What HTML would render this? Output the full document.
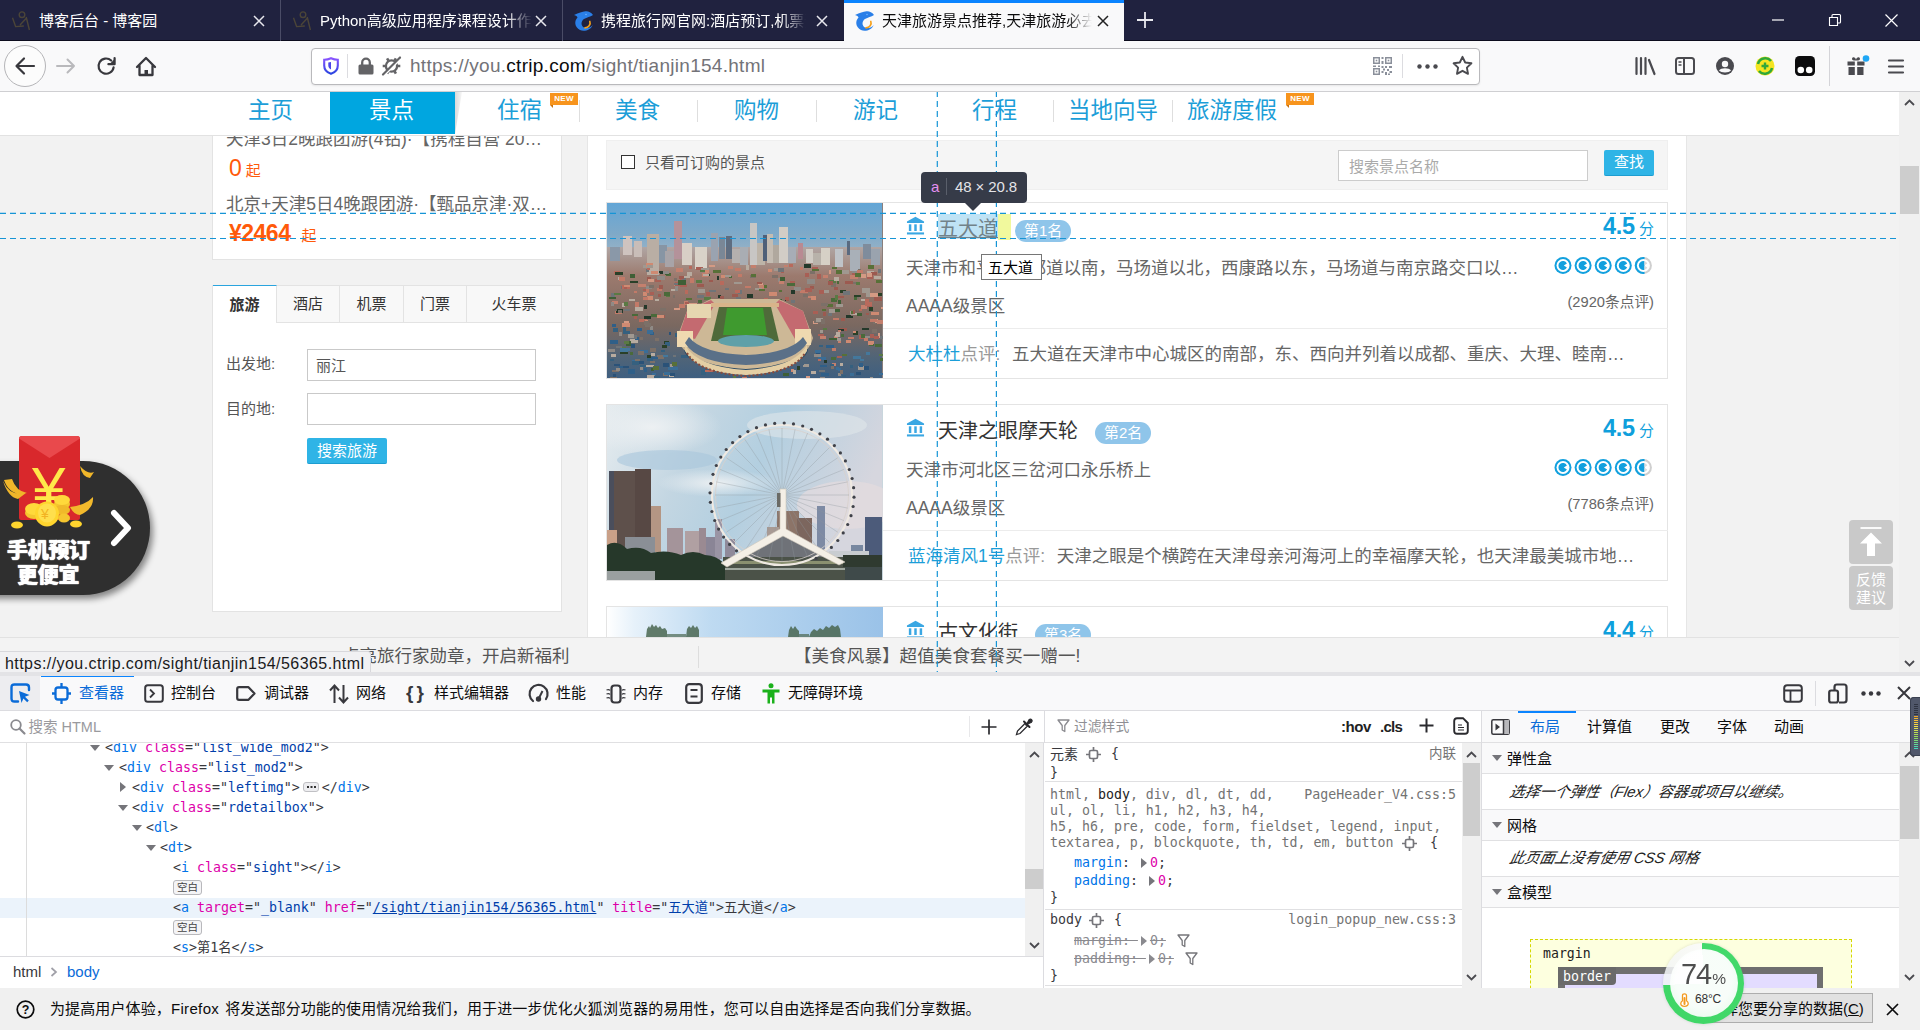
<!DOCTYPE html>
<html lang="zh-CN">
<head>
<meta charset="utf-8">
<title>天津旅游景点推荐</title>
<style>
*{box-sizing:border-box;margin:0;padding:0}
html,body{width:1920px;height:1030px;overflow:hidden;background:#f2f2f2}
body{text-spacing-trim:space-all;position:relative;font-family:"Liberation Sans","Noto Sans CJK SC",sans-serif;font-size:15px;color:#0c0c0d}
.abs{position:absolute}
.t{position:absolute;white-space:nowrap;line-height:1}
.mono{font-family:"DejaVu Sans Mono","Liberation Mono","Noto Sans CJK SC",monospace}
svg{position:absolute;overflow:visible}
/* ===== browser chrome ===== */
#tabbar{left:0;top:0;width:1920px;height:41px;background:#20223f;border-bottom:1px solid #0c0c1d}
.tab{position:absolute;top:0;height:41px;color:#fff;font-size:15px}
.tab .tt{position:absolute;top:12px;white-space:nowrap;line-height:17px;overflow:hidden}
.tabsep{position:absolute;top:0;width:1px;height:41px;background:#4a4c66}
#navbar{z-index:2;left:0;top:41px;width:1920px;height:51px;background:#f9f9fa;border-bottom:1px solid #cfcfd2}
#urlbar{left:311px;top:7px;width:1169px;height:37px;background:#fff;border:1px solid #b9b9bc;border-radius:4px;box-shadow:0 1px 2px rgba(0,0,0,.08)}
/* ===== page ===== */
#page{left:0;top:91px;width:1899px;height:581px;background:#f2f2f2;overflow:hidden}
#pscroll{left:1899px;top:91px;width:21px;height:581px;background:#f0f0f0}

/* page css */
#pnav{left:0;top:1px;width:1899px;height:44px;background:#fff;border-bottom:1px solid #e2e2e2}
.nv{position:absolute;top:7px;font-size:22.500px;line-height:24px;color:#1c9ed8;white-space:nowrap}
.nvs{position:absolute;top:8px;width:1px;height:22px;background:#dedede}
.newb{position:absolute;top:1px;width:28px;height:12px;background:#f7941d;color:#fff;font-size:8px;line-height:12px;text-align:center;font-weight:bold;letter-spacing:.3px}
.newb:after{content:"";position:absolute;left:0;top:12px;border-top:3px solid #c9730f;border-left:3px solid transparent}
#lbox1{left:212px;top:44px;width:350px;height:125px;background:#fff;border:1px solid #e3e3e3;border-top:0}
#lbox2{left:212px;top:194px;width:350px;height:327px;background:#fff;border:1px solid #e3e3e3}
.ltab{position:absolute;top:0;height:37px;background:#f8f8f8;border-right:1px solid #e3e3e3;border-bottom:1px solid #e3e3e3;font-size:15px;line-height:36px;text-align:center;color:#333}
#main{left:587px;top:44px;width:1100px;height:540px;background:#fff;border-left:1px solid #e6e6e6;border-right:1px solid #e6e6e6}
#filter{left:606px;top:49px;width:1062px;height:50px;background:#f5f5f5;border:1px solid #efefef}
.card{position:absolute;left:606px;width:1062px;height:177px;background:#fff;border:1px solid #e4e4e4}
.card .ttl{position:absolute;left:331px;top:13px;font-size:20px;line-height:26px;color:#333;white-space:nowrap}
.card .rank{position:absolute;top:17px;height:22px;border-radius:11px;background:#8fc5ea;color:#fff;font-size:15px;line-height:22px;padding:0 9px;margin-left:-1px;white-space:nowrap}
.card .addr{position:absolute;left:299px;top:53px;font-size:17.500px;line-height:24px;color:#666;white-space:nowrap}
.card .lvl{position:absolute;left:299px;top:91px;font-size:17.500px;line-height:24px;color:#666;white-space:nowrap}
.card .sep{position:absolute;left:276px;top:125px;width:785px;height:1px;background:#ececec}
.card .cmt{position:absolute;left:301px;top:139px;font-size:17.500px;line-height:24px;color:#666;white-space:nowrap}
.card .cmt b{font-weight:normal;color:#1c9ed8}
.card .cmt i{font-style:normal;color:#999;margin-right:2px}
.card .score{position:absolute;right:13px;top:8px;font-size:15px;line-height:30px;color:#0f9fdc;white-space:nowrap}
.card .score b{font-size:23.500px;font-family:"Liberation Sans",sans-serif;letter-spacing:-.3px}
.card .cnt{position:absolute;right:13px;top:89px;font-size:14.700px;line-height:20px;color:#666;white-space:nowrap}
.btnb{position:absolute;background:#2fb4e6;color:#fff;font-size:15px;text-align:center;border-radius:2px;border-bottom:1px solid #1d9dd0}
#pbottom{left:0;top:546px;width:1899px;height:35px;background:#f3f3f3;border-top:1px solid #e2e2e2}
/* ===== devtools ===== */
#split{left:0;top:672px;width:1920px;height:4px;background:#e3e3e6}
#dt{left:0;top:676px;width:1920px;height:312px;background:#fff;overflow:hidden}

/* devtools css */
#dtbar{left:0;top:0;width:1920px;height:35px;background:#f9f9fa;border-bottom:1px solid #dcdce0}
.dtt{position:absolute;top:8px;font-size:15px;line-height:17px;color:#0c0c0d;white-space:nowrap}
#dtsearch{left:0;top:35px;width:1920px;height:32px;background:#fff;border-bottom:1px solid #e0e0e2}
.ml{position:absolute;left:0;width:1024px;height:20px;margin-top:1px;font-size:13.270px;line-height:20px;white-space:pre;color:#38383d}
.ml .tg{color:#0074e8}.ml .an{color:#dd00a9}.ml .av{color:#003eaa}
.tw{position:absolute;width:0;height:0}
.tw.d{border-left:5px solid transparent;border-right:5px solid transparent;border-top:6px solid #75757a}
.tw.r{border-top:5px solid transparent;border-bottom:5px solid transparent;border-left:6px solid #75757a}
.ws{position:absolute;height:14.500px;border:1px solid #b8b8bc;border-radius:3px;background:#f4f4f6;font-size:10.500px;line-height:12.500px;padding:0 3px;color:#444;font-family:"Liberation Sans","Noto Sans CJK SC",sans-serif}
.rl{position:absolute;margin-left:1px;font-size:13.270px;line-height:16px;white-space:pre;color:#737373}
.rl .pn{color:#0074e8}.rl .pv{color:#dd00a9}
.lh{position:absolute;left:1482px;width:417px;height:32px;background:#f9f9fa;border-top:1px solid #e0e0e2;border-bottom:1px solid #e0e0e2}
.lh .t{left:25px;top:6.500px;font-size:15px;line-height:17px;color:#0c0c0d}
.lh .tw{left:10px;top:12px}
.li{position:absolute;left:1508px;font-size:15px;line-height:18px;font-style:italic;color:#222;white-space:nowrap;transform:skewX(-12deg);transform-origin:0 100%}
.sba{position:absolute;width:10px;height:6px}
#notif{left:0;top:988px;width:1920px;height:42px;background:#f0f0f0}
</style>
</head>
<body>
<!-- TABBAR -->
<div id="tabbar" class="abs">
  <!-- tab 1 -->
  <div class="tab" style="left:0;width:280px">
    <svg style="left:12px;top:11px" width="18" height="18" viewBox="0 0 18 18"><circle cx="10" cy="3.700" r="2.800" fill="none" stroke="#4b4538" stroke-width="1.400"/><path d="M0.500 6.800L3.600 15.600L11.800 15M14.500 7L8 14M14.200 6L17.400 19" fill="none" stroke="#4b4538" stroke-width="1.400"/></svg>
    <div class="tt" style="left:39px;width:200px">博客后台 - 博客园</div>
    <svg style="left:253px;top:15px" width="12" height="12" viewBox="0 0 12 12"><path d="M1 1L11 11M11 1L1 11" stroke="#e8e8ee" stroke-width="1.5" fill="none"/></svg>
  </div>
  <div class="tabsep" style="left:280px"></div>
  <!-- tab 2 -->
  <div class="tab" style="left:281px;width:281px">
    <svg style="left:12px;top:11px" width="18" height="18" viewBox="0 0 18 18"><circle cx="10" cy="3.700" r="2.800" fill="none" stroke="#4b4538" stroke-width="1.400"/><path d="M0.500 6.800L3.600 15.600L11.800 15M14.500 7L8 14M14.200 6L17.400 19" fill="none" stroke="#4b4538" stroke-width="1.400"/></svg>
    <div class="tt" style="left:39px;width:212px;-webkit-mask-image:linear-gradient(90deg,#000 88%,transparent 100%)">Python高级应用程序课程设计作业</div>
    <svg style="left:254px;top:15px" width="12" height="12" viewBox="0 0 12 12"><path d="M1 1L11 11M11 1L1 11" stroke="#e8e8ee" stroke-width="1.5" fill="none"/></svg>
  </div>
  <div class="tabsep" style="left:562px"></div>
  <!-- tab 3 -->
  <div class="tab" style="left:563px;width:281px">
    <svg style="left:11px;top:11px" width="20" height="20" viewBox="0 0 20 20"><path d="M19 4C17 1 14 0 11.500 0.300C8 0.500 5 2 0 4C2 4.500 3.200 5.500 3.500 6.500C0 10 0.500 16 6 19C10 21 17 19 18.700 14C17 16.500 13 18 10 16.500C6.500 14.500 7 10 10 8C13 6.200 16 6 19 4Z" fill="#2a7fe8"/><path d="M15.800 10.500C17 13.500 14.500 16.800 11 16.800" stroke="#f5a01a" stroke-width="1.700" fill="none" stroke-linecap="round"/><circle cx="12" cy="3.500" r="0.800" fill="#6fb0ff"/></svg>
    <div class="tt" style="left:38px;width:205px;-webkit-mask-image:linear-gradient(90deg,#000 88%,transparent 100%)">携程旅行网官网:酒店预订,机票预订</div>
    <svg style="left:253px;top:15px" width="12" height="12" viewBox="0 0 12 12"><path d="M1 1L11 11M11 1L1 11" stroke="#e8e8ee" stroke-width="1.5" fill="none"/></svg>
  </div>
  <!-- tab 4 active -->
  <div class="tab" style="left:844px;width:280px;background:#f9f9fa;color:#0c0c0d;border-top:3px solid #0a84ff">
    <svg style="left:11px;top:8px" width="20" height="20" viewBox="0 0 20 20"><path d="M19 4C17 1 14 0 11.500 0.300C8 0.500 5 2 0 4C2 4.500 3.200 5.500 3.500 6.500C0 10 0.500 16 6 19C10 21 17 19 18.700 14C17 16.500 13 18 10 16.500C6.500 14.500 7 10 10 8C13 6.200 16 6 19 4Z" fill="#2a7fe8"/><path d="M15.800 10.500C17 13.500 14.500 16.800 11 16.800" stroke="#f5a01a" stroke-width="1.700" fill="none" stroke-linecap="round"/><circle cx="12" cy="3.500" r="0.800" fill="#6fb0ff"/></svg>
    <div class="tt" style="left:38px;top:9px;width:210px;-webkit-mask-image:linear-gradient(90deg,#000 88%,transparent 100%)">天津旅游景点推荐,天津旅游必去景点</div>
    <svg style="left:253px;top:12px" width="12" height="12" viewBox="0 0 12 12"><path d="M1 1L11 11M11 1L1 11" stroke="#222" stroke-width="1.5" fill="none"/></svg>
  </div>
  <!-- new tab -->
  <svg style="left:1137px;top:12px" width="16" height="16" viewBox="0 0 16 16"><path d="M8 0V16M0 8H16" stroke="#e8e8ee" stroke-width="1.8" fill="none"/></svg>
  <!-- window controls -->
  <svg style="left:1772px;top:19px" width="12" height="2" viewBox="0 0 12 2"><path d="M0 1H12" stroke="#fff" stroke-width="1.2"/></svg>
  <svg style="left:1829px;top:14px" width="12" height="12" viewBox="0 0 12 12"><path d="M0.5 3.5H8.5V11.5H0.5Z M3 3.5V1.5Q3 0.5 4 0.5H10.5Q11.5 0.5 11.5 1.5V8Q11.5 9 10.5 9H8.5" stroke="#fff" stroke-width="1.1" fill="none"/></svg>
  <svg style="left:1885px;top:14px" width="13" height="13" viewBox="0 0 13 13"><path d="M0.5 0.5L12.5 12.5M12.5 0.5L0.5 12.5" stroke="#fff" stroke-width="1.2" fill="none"/></svg>
</div>
<!-- NAVBAR -->
<div id="navbar" class="abs">
  <!-- back -->
  <div class="abs" style="left:4px;top:4px;width:42px;height:42px;border:1px solid #b5b5b8;border-radius:50%;background:#fcfcfc"></div>
  <svg style="left:15px;top:16px" width="20" height="18" viewBox="0 0 20 18"><path d="M19 9H2M9 1.5L1.5 9L9 16.5" stroke="#38383d" stroke-width="2.2" fill="none" stroke-linecap="round" stroke-linejoin="round"/></svg>
  <svg style="left:56px;top:17px" width="20" height="16" viewBox="0 0 20 16"><path d="M1 8H18M11.5 1.5L18 8L11.5 14.5" stroke="#b9b9bc" stroke-width="2" fill="none" stroke-linecap="round" stroke-linejoin="round"/></svg>
  <!-- reload -->
  <svg style="left:96px;top:15px" width="22" height="21" viewBox="0 0 22 21"><path d="M17.600 11.300A7.600 7.600 0 1 1 15.200 4.500" stroke="#38383d" stroke-width="2.200" fill="none" stroke-linecap="round"/><path d="M18.600 2V8.200H12.400" fill="none" stroke="#38383d" stroke-width="2.200" stroke-linejoin="round" stroke-linecap="round"/><path d="M18.600 3V8.200H13.400Z" fill="#38383d"/></svg>
  <!-- home -->
  <svg style="left:135px;top:15px" width="22" height="21" viewBox="0 0 22 21"><path d="M2 11L11 2L20 11M4.5 9.5V19H17.5V9.5" stroke="#38383d" stroke-width="2.3" fill="none" stroke-linecap="round" stroke-linejoin="round"/><rect x="9.5" y="14" width="3.5" height="5" fill="#38383d"/></svg>
  <div id="urlbar" class="abs">
    <!-- shield -->
    <svg style="left:11px;top:8px" width="16" height="18" viewBox="0 0 16 18"><defs><linearGradient id="shg" x1="0" y1="0" x2="0" y2="1"><stop offset="0" stop-color="#8a55ff"/><stop offset="1" stop-color="#2a44e0"/></linearGradient></defs><path d="M8 1.200C5.500 2.300 3.300 2.700 1.200 2.700V8.500C1.200 12.500 3.800 15.400 8 16.800C12.200 15.400 14.800 12.500 14.800 8.500V2.700C12.700 2.700 10.500 2.300 8 1.200Z" fill="#fff" stroke="url(#shg)" stroke-width="2.100"/><path d="M8 5V12.500C6.300 11.500 5.300 10.300 5.300 8.500V5.500C6.300 5.500 7.200 5.300 8 5Z" fill="#4b46e8"/></svg>
    <div class="abs" style="left:35px;top:5px;width:1px;height:24px;background:#dcdce0"></div>
    <!-- lock -->
    <svg style="left:46px;top:8px" width="16" height="18" viewBox="0 0 16 18"><rect x="0.500" y="7.500" width="15" height="10" rx="1.500" fill="#636366"/><path d="M4.200 8V5.500A3.800 3.800 0 0 1 11.800 5.500V8" stroke="#636366" stroke-width="2.300" fill="none"/></svg>
    <!-- tracking -->
    <svg style="left:70px;top:7px" width="19" height="20" viewBox="0 0 19 20"><circle cx="9.500" cy="10" r="5.600" fill="none" stroke="#636366" stroke-width="2.300"/><path d="M15.7 10.0L18.3 10.0M12.6 15.4L13.9 17.6M6.4 15.4L5.1 17.6M3.3 10.0L0.7 10.0M6.4 4.6L5.1 2.4M12.6 4.6L13.9 2.4" stroke="#636366" stroke-width="2.600"/><path d="M1.800 19.300L18.800 2.300" stroke="#fff" stroke-width="2.400"/><path d="M1 18.500L18 1.500" stroke="#636366" stroke-width="2.200" stroke-linecap="round"/></svg>
    <div class="t" style="left:98px;top:7px;font-size:19px;line-height:20px;color:#737378;letter-spacing:.28px">https://you.<span style="color:#0c0c0d">ctrip.com</span>/sight/tianjin154.html</div>
    <!-- QR -->
    <svg style="left:1061px;top:8px" width="19" height="18" viewBox="0 0 19 18" fill="#8a8f9a"><path d="M0 0h7v7h-7zM1.5 1.5v4h4v-4zM12 0h7v7h-7zM13.500 1.5v4h4v-4zM0 11h7v7h-7zM1.5 12.500v4h4v-4z" fill-rule="evenodd"/><rect x="2.700" y="2.700" width="1.600" height="1.600"/><rect x="14.700" y="2.700" width="1.600" height="1.600"/><rect x="2.700" y="13.700" width="1.600" height="1.600"/><rect x="8.500" y="0" width="2" height="2"/><rect x="8.500" y="4" width="2" height="3"/><rect x="8.500" y="9" width="2" height="2"/><rect x="0" y="8.500" width="3" height="1.500"/><rect x="5" y="8.500" width="2" height="1.500"/><rect x="12" y="9" width="2" height="2"/><rect x="16" y="9" width="3" height="2"/><rect x="10" y="11.500" width="2" height="2"/><rect x="14" y="12" width="2" height="2"/><rect x="8.500" y="14" width="2" height="2"/><rect x="12" y="15" width="2" height="3"/><rect x="16.500" y="14" width="2.500" height="2"/><rect x="15" y="16.500" width="2" height="1.500"/></svg>
    <div class="abs" style="left:1090px;top:5px;width:1px;height:24px;background:#dcdce0"></div>
    <svg style="left:1105px;top:15px" width="21" height="5" viewBox="0 0 21 5" fill="#4a4a4f"><circle cx="2.500" cy="2.500" r="2.200"/><circle cx="10.500" cy="2.500" r="2.200"/><circle cx="18.500" cy="2.500" r="2.200"/></svg>
    <svg style="left:1140px;top:6px" width="21" height="21" viewBox="0 0 21 21"><path d="M10.5 1.800L13.200 7.500L19.400 8.300L14.900 12.600L16 18.800L10.500 15.800L5 18.800L6.100 12.600L1.600 8.300L7.800 7.500Z" fill="none" stroke="#4a4a4f" stroke-width="1.900" stroke-linejoin="round"/></svg>
  </div>
  <!-- library -->
  <svg style="left:1635px;top:16px" width="21" height="18" viewBox="0 0 21 18"><path d="M1.500 1V17M6 1V17M10.500 1V17M14 3L19.500 17" stroke="#4a4a4f" stroke-width="2.200" stroke-linecap="round" fill="none"/></svg>
  <!-- sidebar -->
  <svg style="left:1675px;top:16px" width="20" height="18" viewBox="0 0 20 18"><rect x="1" y="1" width="18" height="16" rx="2.500" fill="none" stroke="#4a4a4f" stroke-width="2"/><path d="M9 1V17" stroke="#4a4a4f" stroke-width="2"/><path d="M3.500 5H6.500M3.500 8H6.500" stroke="#4a4a4f" stroke-width="1.300"/></svg>
  <!-- account -->
  <svg style="left:1716px;top:16px" width="18" height="18" viewBox="0 0 18 18"><circle cx="9" cy="9" r="9" fill="#4a4a4f"/><circle cx="9" cy="7" r="3.200" fill="#f9f9fa"/><path d="M3 13.500C5 10.500 13 10.500 15 13.500C13 16 5 16 3 13.500Z" fill="#f9f9fa"/></svg>
  <!-- 360 -->
  <svg style="left:1755px;top:15px" width="20" height="20" viewBox="0 0 20 20"><circle cx="10" cy="10" r="9.500" fill="#f5e521"/><path d="M3 8A7.500 7.500 0 0 1 16 5M17 12A7.500 7.500 0 0 1 4 15" stroke="#2fa83a" stroke-width="2.600" fill="none"/><path d="M10 6.500V13.500M6.500 10H13.500" stroke="#2fa83a" stroke-width="2.400"/></svg>
  <!-- tampermonkey -->
  <svg style="left:1795px;top:15px" width="20" height="20" viewBox="0 0 20 20"><rect x="0" y="0" width="20" height="20" rx="4.500" fill="#0c0c0d"/><circle cx="5.800" cy="14" r="3.300" fill="#fff"/><circle cx="14.200" cy="14" r="3.300" fill="#fff"/></svg>
  <div class="abs" style="left:1829px;top:5px;width:1px;height:40px;background:#d4d4d8"></div>
  <!-- gift -->
  <svg style="left:1847px;top:15px" width="22" height="20" viewBox="0 0 22 20"><path d="M5 3C5 0 9 1 9 4C9 1 13 0 13 3C13 5 9 4.500 9 4.500C9 4.500 5 5 5 3Z" fill="#4a4a4f"/><rect x="0.500" y="5.500" width="7.300" height="4" fill="#4a4a4f"/><rect x="10.200" y="5.500" width="7.300" height="4" fill="#4a4a4f"/><rect x="1.500" y="11" width="6.300" height="8" fill="#4a4a4f"/><rect x="10.200" y="11" width="6.300" height="8" fill="#4a4a4f"/><circle cx="19" cy="2.500" r="3.300" fill="#1fa7f5"/></svg>
  <!-- menu -->
  <svg style="left:1888px;top:18px" width="16" height="15" viewBox="0 0 16 15"><path d="M1 1.500H15M1 7.500H15M1 13.500H15" stroke="#4a4a4f" stroke-width="2.200" stroke-linecap="round"/></svg>
</div>
<!-- PAGE -->
<div id="page" class="abs">
  <div id="lbox1" class="abs">
    <div class="t" style="left:13px;top:-7px;font-size:17.500px;line-height:22px;color:#666">天津3日2晚跟团游(4钻)·【携程自营 20…</div>
    <div class="t" style="left:16px;top:20px;font-size:23px;line-height:26px;color:#ff5a0a">0<span style="font-size:15px;margin-left:4px">起</span></div>
    <div class="t" style="left:13px;top:58px;font-size:17.500px;line-height:22px;color:#666">北京+天津5日4晚跟团游·【甄品京津·双…</div>
    <div class="t" style="left:16px;top:85px;font-size:23px;line-height:26px;color:#ff5a0a;font-weight:bold;letter-spacing:-.5px">¥2464<span style="font-size:15px;margin-left:11px;font-weight:normal;letter-spacing:0">起</span></div>
  </div>
  <div id="lbox2" class="abs">
    <div class="ltab" style="left:0;width:64px;background:#fff;border-bottom:0;border-top:1px solid #2aa4de;font-weight:bold;margin-top:-1px;height:38px;line-height:37px">旅游</div>
    <div class="ltab" style="left:64px;width:63px">酒店</div>
    <div class="ltab" style="left:127px;width:64px">机票</div>
    <div class="ltab" style="left:191px;width:63px">门票</div>
    <div class="ltab" style="left:254px;width:94px;border-right:0">火车票</div>
    <div class="t" style="left:13px;top:70px;font-size:15px;color:#555">出发地:</div>
    <div class="abs" style="left:94px;top:63px;width:229px;height:32px;border:1px solid #c9c9c9;background:#fff"><div class="t" style="left:8px;top:8px;font-size:15px;color:#555">丽江</div></div>
    <div class="t" style="left:13px;top:115px;font-size:15px;color:#555">目的地:</div>
    <div class="abs" style="left:94px;top:107px;width:229px;height:32px;border:1px solid #c9c9c9;background:#fff"></div>
    <div class="btnb" style="left:94px;top:152px;width:80px;height:26px;line-height:25px">搜索旅游</div>
  </div>
  <div id="main" class="abs"></div>
  <div id="filter" class="abs">
    <div class="abs" style="left:14px;top:14px;width:14px;height:14px;border:1.500px solid #333;background:#fff"></div>
    <div class="t" style="left:38px;top:13px;font-size:15px;line-height:18px;color:#555">只看可订购的景点</div>
    <div class="abs" style="left:731px;top:9px;width:250px;height:31px;border:1px solid #ccc;background:#fff"><div class="t" style="left:10px;top:7px;font-size:15px;line-height:18px;color:#aaa">搜索景点名称</div></div>
    <div class="btnb" style="left:997px;top:9px;width:50px;height:26px;line-height:24px">查找</div>
  </div>
  <!-- card 1 -->
  <div class="card" style="top:111px">
    <div class="abs" id="img1" style="left:0;top:0;width:276px;height:175px;overflow:hidden;background:#8a7f7c"><svg style="left:0;top:0" width="275" height="175" viewBox="0 0 275 175" shape-rendering="crispEdges"><defs><linearGradient id="sk1" x1="0" y1="0" x2="0" y2="1"><stop offset="0" stop-color="#63a6d6"/><stop offset="0.5" stop-color="#7fa9c8"/><stop offset="1" stop-color="#a8b9c6"/></linearGradient><linearGradient id="ct1" x1="0" y1="0" x2="0" y2="1"><stop offset="0" stop-color="#b0a6a4"/><stop offset="0.22" stop-color="#9c7a6e"/><stop offset="0.6" stop-color="#7a6860"/><stop offset="0.85" stop-color="#4f6478"/><stop offset="1" stop-color="#3f5f80"/></linearGradient></defs><rect width="275" height="62" fill="url(#sk1)"/><rect y="44" width="275" height="131" fill="url(#ct1)"/><rect x="16" y="33" width="9" height="19" fill="#cfc3bf"/><rect x="27" y="38" width="8" height="16" fill="#c9bdb8"/><rect x="40" y="31" width="12" height="41" fill="#b9aea4"/><rect x="52" y="42" width="8" height="18" fill="#8795a4"/><rect x="67" y="18" width="8" height="38" fill="#b4929a"/><rect x="75" y="40" width="10" height="22" fill="#d8cfc6"/><rect x="88" y="44" width="12" height="22" fill="#d9d2c8"/><rect x="104" y="30" width="7" height="28" fill="#9aa3b0"/><rect x="112" y="34" width="6" height="22" fill="#7a8796"/><rect x="119" y="33" width="6" height="23" fill="#5f6d80"/><rect x="133" y="44" width="8" height="18" fill="#a9adb3"/><rect x="143" y="20" width="7" height="42" fill="#c8c6c4"/><rect x="150" y="40" width="8" height="22" fill="#bdb4a8"/><rect x="156" y="32" width="5" height="26" fill="#4f6078"/><rect x="160" y="31" width="6" height="29" fill="#c4bcb2"/><rect x="166" y="42" width="6" height="18" fill="#b0a89e"/><rect x="172" y="24" width="9" height="36" fill="#d2cdc6"/><rect x="181" y="44" width="8" height="16" fill="#a7adb6"/><rect x="191" y="40" width="5" height="16" fill="#b98a92"/><rect x="199" y="46" width="7" height="14" fill="#d0cbc4"/><rect x="214" y="45" width="9" height="17" fill="#d6d0c6"/><rect x="228" y="46" width="8" height="18" fill="#bfc3c8"/><rect x="240" y="38" width="3" height="14" fill="#5a6a80"/><rect x="243" y="47" width="10" height="21" fill="#a9b0b8"/><rect x="256" y="41" width="8" height="15" fill="#7f8c9c"/><rect x="264" y="46" width="9" height="16" fill="#9aa3ae"/><rect x="3" y="44" width="10" height="14" fill="#8a98a8"/><rect x="58" y="48" width="9" height="16" fill="#a8a4a8"/><rect x="125" y="46" width="8" height="14" fill="#b5b0ae"/><rect x="206" y="50" width="8" height="12" fill="#b8b2aa"/><rect x="89.1" y="77.3" width="6.1" height="2.2" fill="#5a7a44"/><rect x="59" y="69.9" width="4.8" height="2.6" fill="#4a6a3a"/><rect x="227.4" y="74.2" width="3.7" height="3.6" fill="#7c7068"/><rect x="161" y="65.7" width="3.7" height="3.4" fill="#cf8a72"/><rect x="39.7" y="73.5" width="4.2" height="4" fill="#9c5a50"/><rect x="157.1" y="81.6" width="3" height="3.8" fill="#587038"/><rect x="56.6" y="138.2" width="4.9" height="2.8" fill="#2a4028"/><rect x="99.4" y="88.6" width="3.5" height="3.9" fill="#a85f55"/><rect x="200.6" y="93.1" width="7.9" height="2.3" fill="#c4806e"/><rect x="94.1" y="167.3" width="4.8" height="4.4" fill="#35607f"/><rect x="259.8" y="114.5" width="6.2" height="2.2" fill="#7c7068"/><rect x="273.1" y="154.5" width="4.1" height="3" fill="#4a6a3a"/><rect x="258.7" y="100.9" width="5.9" height="3.2" fill="#a85f55"/><rect x="35.6" y="88.5" width="4.7" height="4.2" fill="#cf8a72"/><rect x="110.5" y="92" width="3.3" height="3.1" fill="#24382a"/><rect x="243.2" y="170.1" width="3.3" height="2.4" fill="#3a6d96"/><rect x="3.3" y="155.6" width="3.5" height="2.7" fill="#35607f"/><rect x="262.1" y="139.4" width="5.3" height="3.5" fill="#4a6a3a"/><rect x="261.8" y="138.3" width="5.6" height="3" fill="#cf8a72"/><rect x="174.4" y="67.2" width="2.9" height="2.5" fill="#a85f55"/><rect x="165.2" y="71.8" width="5.6" height="3.3" fill="#7c7068"/><rect x="7" y="160.5" width="5.9" height="2.4" fill="#2a5278"/><rect x="31.7" y="116.1" width="7.9" height="3.2" fill="#b86a5c"/><rect x="28.1" y="99.4" width="4" height="4.1" fill="#c27a68"/><rect x="56.4" y="169.5" width="4.5" height="3.7" fill="#7c7068"/><rect x="25" y="157.2" width="5.4" height="4.3" fill="#3a6d96"/><rect x="90.7" y="85.6" width="7" height="4.5" fill="#a09890"/><rect x="225" y="145.1" width="3.7" height="3.3" fill="#c27a68"/><rect x="272.1" y="150.9" width="5.1" height="2.5" fill="#5a7a44"/><rect x="271.7" y="169.8" width="4.5" height="2.6" fill="#3a6d96"/><rect x="270.9" y="130.2" width="2.5" height="4.3" fill="#d49a84"/><rect x="23.3" y="136" width="7.5" height="4" fill="#b8aca0"/><rect x="244.5" y="109.9" width="6" height="2.2" fill="#b8aca0"/><rect x="23.4" y="78.3" width="8" height="2.1" fill="#2a4028"/><rect x="221.8" y="76.8" width="7" height="4.5" fill="#5a7a44"/><rect x="42.9" y="123.1" width="2.6" height="4" fill="#8f8a86"/><rect x="227.2" y="84.3" width="3.9" height="2.7" fill="#9c5a50"/><rect x="229.4" y="67" width="6.6" height="4.2" fill="#587038"/><rect x="144" y="62.2" width="4.9" height="2.5" fill="#c4806e"/><rect x="41.2" y="76.3" width="5.9" height="2.3" fill="#d49a84"/><rect x="215.7" y="72.2" width="5.6" height="2.6" fill="#c4806e"/><rect x="26.9" y="112" width="2.7" height="4.2" fill="#a85f55"/><rect x="259.1" y="89.9" width="5.6" height="4.4" fill="#a09890"/><rect x="117.8" y="84.5" width="4.2" height="2.3" fill="#6f7478"/><rect x="39.3" y="161.5" width="7.8" height="2.5" fill="#b8aca0"/><rect x="243.4" y="78.7" width="6.2" height="2.6" fill="#7c7068"/><rect x="98.1" y="70.6" width="4.5" height="2.8" fill="#24382a"/><rect x="5" y="98.1" width="5.9" height="3.3" fill="#c4806e"/><rect x="62.9" y="160.8" width="3" height="2.7" fill="#a09890"/><rect x="74.4" y="74.9" width="4.8" height="4.3" fill="#6f7478"/><rect x="89.9" y="92.1" width="6.9" height="2.5" fill="#6f7478"/><rect x="258" y="133" width="6.9" height="2.2" fill="#8f8a86"/><rect x="72.7" y="74" width="2.6" height="4.5" fill="#a85f55"/><rect x="171" y="65" width="6.4" height="4.3" fill="#6f7478"/><rect x="13.9" y="83.2" width="4.2" height="2.8" fill="#6f7478"/><rect x="74.4" y="152.4" width="8" height="2.1" fill="#35607f"/><rect x="151.5" y="81.8" width="5.1" height="4.3" fill="#c4806e"/><rect x="266.8" y="95.4" width="3.7" height="2.6" fill="#d49a84"/><rect x="200.4" y="76.1" width="7.9" height="4.5" fill="#8f8a86"/><rect x="19.4" y="145.2" width="3.9" height="2.4" fill="#44789c"/><rect x="239.4" y="137.1" width="4.1" height="2.6" fill="#cf8a72"/><rect x="51" y="90.9" width="2.5" height="2.9" fill="#9c5a50"/><rect x="89" y="64" width="7.4" height="2.5" fill="#a85f55"/><rect x="138.3" y="83.1" width="5.3" height="2" fill="#c27a68"/><rect x="39.6" y="127.5" width="4.7" height="2.7" fill="#4a6a3a"/><rect x="196.9" y="161.1" width="4.6" height="2.8" fill="#a09890"/><rect x="39.8" y="154.9" width="6.4" height="3.3" fill="#35607f"/><rect x="38.3" y="120.2" width="5.3" height="4.1" fill="#7c7068"/><rect x="219.4" y="141.8" width="7.8" height="3.6" fill="#2f5f88"/><rect x="36.6" y="101.5" width="3.1" height="4.1" fill="#24382a"/><rect x="5.2" y="121.1" width="3.8" height="2.7" fill="#2f5f88"/><rect x="205.8" y="117.8" width="5.4" height="3.6" fill="#d49a84"/><rect x="232.7" y="87" width="6.7" height="2.6" fill="#2a4028"/><rect x="210.9" y="131" width="6" height="2.2" fill="#a85f55"/><rect x="170.8" y="75.3" width="5.2" height="3.2" fill="#8f8a86"/><rect x="32.6" y="162.8" width="3.6" height="4.4" fill="#8f8a86"/><rect x="79.6" y="68.8" width="5.3" height="4.5" fill="#b8aca0"/><rect x="57.7" y="168.7" width="3.7" height="3.5" fill="#35607f"/><rect x="72" y="101.3" width="5.8" height="3.6" fill="#c27a68"/><rect x="193.4" y="86.6" width="7.4" height="3.2" fill="#c27a68"/><rect x="261.2" y="138.4" width="4.7" height="3.8" fill="#cf8a72"/><rect x="0.5" y="146.3" width="7.1" height="2.3" fill="#8f8a86"/><rect x="247.9" y="93.3" width="4.5" height="3" fill="#7c7068"/><rect x="21" y="166.4" width="6.7" height="4.1" fill="#2f5f88"/><rect x="229.5" y="92.8" width="7.6" height="2.6" fill="#9c5a50"/><rect x="215.9" y="109.2" width="2.7" height="3.9" fill="#9c5a50"/><rect x="13.6" y="144.2" width="5" height="3.9" fill="#5a7a44"/><rect x="151.3" y="79.6" width="4.8" height="2.7" fill="#d49a84"/><rect x="268.5" y="89.9" width="6.1" height="2.8" fill="#2a4028"/><rect x="32.9" y="134" width="2.9" height="3.3" fill="#7c7068"/><rect x="60.5" y="164.2" width="8" height="3.1" fill="#3a6d96"/><rect x="67.1" y="80.1" width="5.6" height="2.8" fill="#c4806e"/><rect x="206.2" y="107.5" width="4.8" height="3.3" fill="#a85f55"/><rect x="206.8" y="117.3" width="5.7" height="2.9" fill="#7c7068"/><rect x="59.4" y="91.2" width="3.9" height="3" fill="#5a7a44"/><rect x="233.4" y="160.4" width="2.6" height="2.1" fill="#b8aca0"/><rect x="266.3" y="116.3" width="2.9" height="4.3" fill="#7c7068"/><rect x="235.3" y="171.8" width="3.9" height="2.3" fill="#35607f"/><rect x="267.3" y="72.5" width="7" height="3.8" fill="#b8aca0"/><rect x="23.4" y="149.3" width="2.5" height="2.3" fill="#4a6a3a"/><rect x="177.5" y="94.9" width="3.2" height="2.6" fill="#24382a"/><rect x="210.1" y="71.4" width="4.2" height="4.4" fill="#a85f55"/><rect x="61.5" y="129.1" width="2.6" height="2.8" fill="#2a5278"/><rect x="130.7" y="87" width="3.9" height="4.4" fill="#6f7478"/><rect x="15.2" y="82.3" width="7.4" height="3.6" fill="#b86a5c"/><rect x="183.5" y="166.4" width="3.7" height="2.1" fill="#cf8a72"/><rect x="1.9" y="93.6" width="7.1" height="2.2" fill="#3f5f36"/><rect x="63.5" y="85.5" width="6.7" height="2.7" fill="#b8aca0"/><rect x="15.5" y="128.4" width="7.6" height="2.1" fill="#35607f"/><rect x="39" y="66" width="2.8" height="3" fill="#6f7478"/><rect x="201.5" y="174.7" width="7.6" height="2.8" fill="#35607f"/><rect x="205.2" y="63.7" width="6.2" height="2.9" fill="#a85f55"/><rect x="121.7" y="72.5" width="2.9" height="2.2" fill="#4a6a3a"/><rect x="24.1" y="141.1" width="3.6" height="3.4" fill="#2a5278"/><rect x="8.3" y="107.2" width="7" height="3.9" fill="#c27a68"/><rect x="17.1" y="82.4" width="2.8" height="3.5" fill="#a85f55"/><rect x="263.4" y="131" width="3.9" height="3.8" fill="#a85f55"/><rect x="260.3" y="67.5" width="7" height="2.3" fill="#b8aca0"/><rect x="262.3" y="104.4" width="3.9" height="3.1" fill="#2a4028"/><rect x="50.3" y="152.3" width="6.6" height="4.1" fill="#7c7068"/><rect x="64.9" y="159" width="5" height="4" fill="#587038"/><rect x="54.3" y="146.6" width="3.9" height="2.2" fill="#35607f"/><rect x="149.8" y="78.5" width="4.8" height="2.3" fill="#9c5a50"/><rect x="23.1" y="71.1" width="5.2" height="3.8" fill="#3f5f36"/><rect x="36.6" y="113" width="7.4" height="2.6" fill="#24382a"/><rect x="208.9" y="149.7" width="4.1" height="2.7" fill="#2a5278"/><rect x="203" y="82.9" width="3.9" height="2.6" fill="#9c5a50"/><rect x="51.8" y="67.5" width="3.9" height="2.6" fill="#24382a"/><rect x="222.3" y="135.1" width="8" height="2.3" fill="#3f5f36"/><rect x="231.2" y="165.2" width="2.7" height="2.7" fill="#3a6d96"/><rect x="53.4" y="68.6" width="5.3" height="2.4" fill="#24382a"/><rect x="260.1" y="72.2" width="5.8" height="3.5" fill="#a85f55"/><rect x="93.5" y="65.1" width="8" height="2.1" fill="#a09890"/><rect x="224.1" y="154.2" width="4.7" height="2.9" fill="#4a6a3a"/><rect x="55.9" y="151.5" width="5.5" height="2.2" fill="#44789c"/><rect x="182.6" y="77.8" width="5.4" height="3.6" fill="#a85f55"/><rect x="112.7" y="92.6" width="4.2" height="4.4" fill="#9c5a50"/><rect x="243" y="107.6" width="2.6" height="3.9" fill="#a09890"/><rect x="259" y="109.9" width="3.4" height="2.3" fill="#9c5a50"/><rect x="242.8" y="113" width="3.4" height="2" fill="#24382a"/><rect x="221.8" y="105.6" width="5.7" height="4.3" fill="#a09890"/><rect x="40.1" y="92.6" width="5.4" height="4.3" fill="#cf8a72"/><rect x="207.2" y="151.1" width="6.9" height="2.8" fill="#8f8a86"/><rect x="268.3" y="115.5" width="2.8" height="4.3" fill="#d49a84"/><rect x="44.1" y="150.4" width="3.7" height="3" fill="#b8aca0"/><rect x="50.3" y="85.1" width="4.7" height="3.3" fill="#c27a68"/><rect x="41.1" y="171.6" width="7" height="2.5" fill="#8f8a86"/><rect x="183.7" y="97.3" width="4.6" height="3.1" fill="#6f7478"/><rect x="178.5" y="95.4" width="3.9" height="3" fill="#9c5a50"/><rect x="120.5" y="62.7" width="5.9" height="3.2" fill="#c4806e"/><rect x="230" y="153.2" width="4.7" height="2.2" fill="#a85f55"/><rect x="25.2" y="110.8" width="5.3" height="2.1" fill="#4a6a3a"/><rect x="253.6" y="96.1" width="6.5" height="2.2" fill="#b8aca0"/><rect x="7.1" y="67.6" width="5.9" height="3.7" fill="#b86a5c"/><rect x="270" y="116.6" width="7.8" height="4.3" fill="#c4806e"/><rect x="198.3" y="85.4" width="7.1" height="3.5" fill="#a85f55"/><rect x="246.5" y="91.6" width="7" height="2.4" fill="#2a4028"/><rect x="57.3" y="90.2" width="5.3" height="2.8" fill="#b86a5c"/><rect x="76.5" y="97.7" width="4.6" height="4" fill="#c4806e"/><rect x="242.7" y="72" width="8" height="3.6" fill="#c4806e"/><rect x="101.5" y="76.8" width="4.3" height="2.2" fill="#9c5a50"/><rect x="204.5" y="65.6" width="7" height="2.6" fill="#587038"/><rect x="255.3" y="163" width="6.5" height="3.9" fill="#2a5278"/><rect x="36.3" y="86.1" width="6.1" height="2.1" fill="#a85f55"/><rect x="82.8" y="75.4" width="4.5" height="4.1" fill="#c27a68"/><rect x="257.6" y="88" width="3.3" height="2.2" fill="#24382a"/><rect x="215.1" y="106.2" width="4" height="2" fill="#587038"/><rect x="245.5" y="128.4" width="5.7" height="3.5" fill="#2a4028"/><rect x="68.3" y="163.9" width="2.7" height="3.3" fill="#3a6d96"/><rect x="43.8" y="164.9" width="3.1" height="3.5" fill="#3f5f36"/><rect x="39.1" y="82.9" width="5.8" height="3.3" fill="#587038"/><rect x="48" y="95.6" width="4.2" height="2.1" fill="#b8aca0"/><rect x="196.7" y="60.7" width="7.1" height="3.9" fill="#24382a"/><rect x="180.3" y="80.2" width="8" height="2.7" fill="#4a6a3a"/><rect x="195.7" y="90.6" width="5.5" height="3.1" fill="#7c7068"/><rect x="267.3" y="94" width="7.6" height="4.2" fill="#9c5a50"/><rect x="4.2" y="89.9" width="3.8" height="3.9" fill="#6f7478"/><rect x="52.8" y="104.7" width="5.8" height="2.9" fill="#7c7068"/><rect x="156.8" y="95.4" width="3.7" height="3.6" fill="#b86a5c"/><rect x="39.8" y="63.1" width="3.1" height="4.3" fill="#b86a5c"/><rect x="192.7" y="63.6" width="3.3" height="3.6" fill="#c27a68"/><rect x="202.6" y="67.6" width="5.7" height="2.9" fill="#7c7068"/><rect x="245.1" y="67.6" width="7.3" height="4.3" fill="#8f8a86"/><rect x="67.8" y="83.4" width="2.7" height="4.4" fill="#8f8a86"/><rect x="226.9" y="132.6" width="4.1" height="2.2" fill="#c4806e"/><rect x="177.7" y="93.9" width="4.4" height="2.7" fill="#a85f55"/><rect x="13.3" y="147.4" width="7.5" height="3.9" fill="#2a4028"/><rect x="234.1" y="131.1" width="2.7" height="3" fill="#4a6a3a"/><rect x="147.9" y="84.9" width="7.2" height="2.2" fill="#a09890"/><rect x="14.8" y="100" width="3" height="3.7" fill="#b8aca0"/><rect x="43.7" y="153.8" width="7.7" height="2.6" fill="#2f5f88"/><rect x="134.8" y="174" width="5.6" height="2.3" fill="#c27a68"/><rect x="244.9" y="69.9" width="7.4" height="2.1" fill="#a85f55"/><rect x="47.1" y="173" width="6" height="4.4" fill="#35607f"/><rect x="207.5" y="146.6" width="6.1" height="2.9" fill="#3a6d96"/><rect x="238.7" y="111.8" width="5.5" height="2.8" fill="#24382a"/><rect x="212.7" y="126.6" width="3.2" height="3.2" fill="#a09890"/><rect x="139.6" y="90.8" width="6.7" height="4.1" fill="#24382a"/><rect x="42.9" y="88.5" width="4.3" height="3.3" fill="#a85f55"/><rect x="262.8" y="89.7" width="7.8" height="4.5" fill="#d49a84"/><rect x="28" y="104.2" width="7.9" height="4" fill="#b8aca0"/><rect x="75.3" y="72.6" width="7.5" height="2.7" fill="#b8aca0"/><rect x="9.3" y="105.9" width="6.9" height="3.7" fill="#24382a"/><rect x="81.5" y="62.5" width="3.9" height="3.8" fill="#b86a5c"/><rect x="249.7" y="109.5" width="5.7" height="3.9" fill="#3f5f36"/><rect x="241.3" y="133.8" width="5.7" height="2.6" fill="#c27a68"/><rect x="124.8" y="96" width="6" height="2.2" fill="#c4806e"/><rect x="43" y="157.7" width="5.2" height="2" fill="#7c7068"/><rect x="185.7" y="167" width="3.5" height="3.6" fill="#b8aca0"/><rect x="228.8" y="164.4" width="3.1" height="2.6" fill="#3a6d96"/><rect x="142.8" y="71.6" width="5.7" height="3.4" fill="#7c7068"/><rect x="4.4" y="151.1" width="4.5" height="2.9" fill="#b8aca0"/><rect x="57.8" y="138.7" width="4.7" height="3.9" fill="#35607f"/><rect x="97.8" y="66.5" width="4" height="3" fill="#cf8a72"/><rect x="251.7" y="132.3" width="6.2" height="3.5" fill="#a85f55"/><rect x="203.9" y="168.1" width="5.4" height="2.5" fill="#b8aca0"/><rect x="127.1" y="78.9" width="7.6" height="2.2" fill="#a09890"/><rect x="62.1" y="170.8" width="4.4" height="3.6" fill="#b8aca0"/><rect x="128.7" y="93.8" width="5.5" height="2.3" fill="#6f7478"/><rect x="215.5" y="86.5" width="6.4" height="3.7" fill="#a09890"/><rect x="219.7" y="101.2" width="6.1" height="2.8" fill="#587038"/><rect x="235" y="66.6" width="7.1" height="4.3" fill="#a09890"/><rect x="57.7" y="68.3" width="4.1" height="3.5" fill="#3f5f36"/><rect x="51.1" y="112" width="6.8" height="2.5" fill="#9c5a50"/><rect x="46.2" y="162.5" width="5.8" height="4" fill="#587038"/><rect x="216.7" y="156.5" width="3.6" height="3.7" fill="#24382a"/><rect x="230.8" y="137.2" width="3.1" height="2.3" fill="#c4806e"/><rect x="38.3" y="116.7" width="2.8" height="3.2" fill="#cf8a72"/><rect x="67.8" y="78.9" width="5.8" height="3.8" fill="#a85f55"/><rect x="264.2" y="68.7" width="6" height="3.6" fill="#9c5a50"/><rect x="12.6" y="144.7" width="8" height="4" fill="#44789c"/><rect x="9.3" y="142.6" width="5.9" height="2.8" fill="#6f7478"/><rect x="78.1" y="99.3" width="3.9" height="2.1" fill="#a85f55"/><rect x="227.6" y="106.4" width="5.3" height="2.7" fill="#3f5f36"/><rect x="91" y="96.5" width="4.1" height="3.5" fill="#4a6a3a"/><rect x="109.6" y="72.5" width="2.8" height="4.1" fill="#24382a"/><rect x="16.5" y="117.6" width="5.5" height="2.9" fill="#d49a84"/><rect x="187.3" y="84.4" width="6.2" height="3.1" fill="#8f8a86"/><rect x="115.9" y="71.6" width="7.6" height="2" fill="#a09890"/><rect x="216.3" y="124.6" width="3.9" height="2.8" fill="#5a7a44"/><rect x="5.6" y="125.1" width="5.7" height="4.3" fill="#35607f"/><rect x="10.8" y="73.7" width="7" height="3.4" fill="#b8aca0"/><rect x="18.5" y="138.2" width="5.8" height="4.5" fill="#3f5f36"/><rect x="28.1" y="134.1" width="3.7" height="2.4" fill="#2f5f88"/><rect x="2.6" y="137" width="7.9" height="4.1" fill="#2f5f88"/><rect x="35.5" y="62" width="6.5" height="2.6" fill="#a09890"/><rect x="253.8" y="102.1" width="6.6" height="3.7" fill="#c4806e"/><rect x="23.2" y="132.3" width="6.4" height="3.2" fill="#6f7478"/><rect x="251.2" y="66.1" width="2.7" height="2.2" fill="#7c7068"/><rect x="21.9" y="95.8" width="6.5" height="2.4" fill="#b8aca0"/><rect x="167.5" y="96.4" width="7.7" height="3.8" fill="#3f5f36"/><rect x="39.8" y="151.7" width="4.5" height="3.6" fill="#2a4028"/><rect x="124.5" y="91.3" width="6.7" height="2.8" fill="#9c5a50"/><rect x="267.8" y="140.9" width="7.1" height="2.8" fill="#4a6a3a"/><rect x="228.6" y="129.1" width="4.2" height="3.1" fill="#b8aca0"/><rect x="212.1" y="87" width="5" height="3.7" fill="#a85f55"/><rect x="224.4" y="162.1" width="2.7" height="4.1" fill="#7c7068"/><rect x="40.4" y="172.2" width="6.9" height="3.4" fill="#b8aca0"/><rect x="95.4" y="69.8" width="5.5" height="4" fill="#c4806e"/><rect x="198.6" y="173" width="4.2" height="2.1" fill="#d49a84"/><rect x="56.8" y="89.3" width="6.6" height="4" fill="#4a6a3a"/><rect x="17.2" y="105.8" width="5.4" height="2.6" fill="#6f7478"/><rect x="52" y="82.1" width="3.5" height="3.8" fill="#9c5a50"/><rect x="235.7" y="88.3" width="7.6" height="3.2" fill="#6f7478"/><rect x="42.9" y="128.7" width="4.4" height="3.3" fill="#2f5f88"/><rect x="56.3" y="160.1" width="5.6" height="3.5" fill="#2a5278"/><rect x="211" y="154.2" width="7.8" height="2.6" fill="#3a6d96"/><rect x="273.5" y="103.5" width="2.7" height="2.1" fill="#d49a84"/><rect x="250.2" y="67.4" width="5.8" height="3" fill="#c27a68"/><rect x="176.2" y="170" width="6.2" height="3" fill="#3f5f36"/><rect x="102" y="87" width="6.5" height="2.4" fill="#6f7478"/><rect x="16.3" y="123.6" width="2.7" height="4.3" fill="#35607f"/><rect x="271" y="66.4" width="3.3" height="3.9" fill="#6f7478"/><rect x="251.4" y="162.6" width="5.1" height="4.3" fill="#a09890"/><rect x="255.1" y="85.4" width="7.6" height="4.2" fill="#a09890"/><rect x="214" y="170.2" width="7.6" height="3" fill="#2f5f88"/><rect x="226.3" y="114.9" width="6" height="2.4" fill="#c27a68"/><rect x="49.6" y="111.9" width="7.4" height="3.1" fill="#cf8a72"/><rect x="113.2" y="77.9" width="4" height="4.1" fill="#b86a5c"/><rect x="71.7" y="72.6" width="5" height="3.2" fill="#9c5a50"/><rect x="15.6" y="162.9" width="6.2" height="2.5" fill="#2a5278"/><rect x="32.8" y="146.8" width="7.8" height="3.1" fill="#3a6d96"/><rect x="254.4" y="71.2" width="4.1" height="4.2" fill="#d49a84"/><rect x="269.1" y="76.6" width="6" height="3.1" fill="#587038"/><rect x="38.5" y="60.2" width="7.1" height="3.3" fill="#cf8a72"/><rect x="11.2" y="107" width="4" height="2.5" fill="#7c7068"/><rect x="211.9" y="141.8" width="3.6" height="2.2" fill="#35607f"/><rect x="48.2" y="75.8" width="6.2" height="3.6" fill="#a85f55"/><rect x="55.6" y="67.6" width="6.5" height="3" fill="#8f8a86"/><rect x="260.1" y="70.4" width="4.8" height="3.9" fill="#d49a84"/><rect x="73.2" y="81.4" width="7.1" height="2.9" fill="#a85f55"/><rect x="97.9" y="167.2" width="7.8" height="2.2" fill="#b86a5c"/><rect x="224.5" y="159.5" width="4.3" height="3.8" fill="#c4806e"/><rect x="247" y="93.5" width="3.1" height="3.8" fill="#4a6a3a"/><rect x="5.7" y="171.3" width="3.7" height="2.5" fill="#2a5278"/><rect x="5.3" y="166.5" width="6.6" height="2.7" fill="#7c7068"/><rect x="127.6" y="87.4" width="4.9" height="2.9" fill="#b86a5c"/><rect x="12.4" y="74.2" width="5.2" height="3.3" fill="#c27a68"/><rect x="33.4" y="161.7" width="5.5" height="2.6" fill="#35607f"/><rect x="260.8" y="62.1" width="6" height="3.7" fill="#587038"/><rect x="258.9" y="149.3" width="4.4" height="2.6" fill="#44789c"/><rect x="231.8" y="124.9" width="7.9" height="2.8" fill="#9c5a50"/><rect x="14.7" y="119.5" width="7.8" height="4.3" fill="#cf8a72"/><rect x="182.4" y="61.3" width="3.1" height="2.5" fill="#b86a5c"/><rect x="138.8" y="62.4" width="3.3" height="4.4" fill="#b8aca0"/><rect x="243.2" y="161.7" width="2.7" height="3.6" fill="#35607f"/><rect x="254.2" y="131.4" width="3.9" height="3.3" fill="#4a6a3a"/><rect x="79.1" y="95.1" width="6.1" height="2.3" fill="#587038"/><rect x="247.9" y="69.7" width="5.7" height="4.3" fill="#587038"/><rect x="36.1" y="93.8" width="4.7" height="2.7" fill="#c27a68"/><rect x="203.6" y="93" width="5" height="3.7" fill="#cf8a72"/><rect x="55.3" y="141.7" width="5" height="3.4" fill="#2a4028"/><rect x="225.2" y="63.6" width="4.3" height="2.5" fill="#587038"/><rect x="44.6" y="169.5" width="4.3" height="2.8" fill="#3a6d96"/><rect x="43.6" y="67.7" width="7.3" height="3.1" fill="#cf8a72"/><rect x="229.4" y="100.7" width="6.7" height="3.3" fill="#a09890"/><rect x="38.6" y="83.3" width="5.9" height="2.7" fill="#8f8a86"/><rect x="208.9" y="114.7" width="6.8" height="3.8" fill="#a09890"/><rect x="113.6" y="71.9" width="4.8" height="3.4" fill="#cf8a72"/><rect x="264.8" y="125.8" width="4.8" height="4" fill="#7c7068"/><rect x="30.5" y="157.9" width="6.3" height="2.7" fill="#2a5278"/><rect x="105.7" y="97" width="6.8" height="4.1" fill="#2a4028"/><rect x="220.8" y="110.1" width="4.6" height="2.6" fill="#6f7478"/><rect x="230.5" y="170.3" width="3.6" height="3.1" fill="#8f8a86"/><rect x="7" y="89.5" width="7.4" height="2.7" fill="#5a7a44"/><rect x="148.1" y="174.8" width="5.3" height="3.3" fill="#b8aca0"/><rect x="127.7" y="64.7" width="6.2" height="3.1" fill="#c27a68"/><rect x="144.4" y="71.4" width="4.6" height="3" fill="#587038"/><rect x="42.4" y="81.6" width="4.8" height="3" fill="#7c7068"/><rect x="224.4" y="79.6" width="4.2" height="4.4" fill="#7c7068"/><rect x="48.3" y="135.4" width="4.1" height="2.9" fill="#7c7068"/><rect x="244.2" y="108.4" width="3.4" height="2.7" fill="#587038"/><rect x="245.6" y="107.4" width="2.8" height="3.4" fill="#9c5a50"/><rect x="273.3" y="133.2" width="2.7" height="3" fill="#6f7478"/><rect x="252.2" y="105.7" width="3" height="2" fill="#b86a5c"/><rect x="146.2" y="174.7" width="5.7" height="3" fill="#b86a5c"/><rect x="8" y="68.8" width="7.7" height="3.2" fill="#2a4028"/><rect x="221.8" y="67.1" width="2.6" height="3.9" fill="#d49a84"/><rect x="65.5" y="91.7" width="2.7" height="3.6" fill="#7c7068"/><rect x="17.3" y="82" width="5.9" height="2" fill="#cf8a72"/><rect x="68.6" y="65.1" width="7.6" height="4.1" fill="#c4806e"/><rect x="224.4" y="94.9" width="5.8" height="4.4" fill="#4a6a3a"/><rect x="66.8" y="104.8" width="6.5" height="2.6" fill="#d49a84"/><rect x="66.9" y="79.9" width="4.5" height="2.5" fill="#6f7478"/><rect x="264.3" y="108.6" width="7.5" height="3.4" fill="#cf8a72"/><rect x="78" y="87.3" width="2.7" height="3.7" fill="#b86a5c"/><rect x="66.5" y="74.9" width="3.6" height="3.4" fill="#7c7068"/><rect x="221.4" y="78.3" width="4.4" height="3.8" fill="#9c5a50"/><rect x="57.2" y="169.4" width="5.3" height="2.6" fill="#3a6d96"/><rect x="259.1" y="174.8" width="5.8" height="3.1" fill="#7c7068"/><rect x="67.7" y="129.9" width="3.7" height="4.2" fill="#35607f"/><rect x="25.2" y="158" width="6.5" height="3.9" fill="#35607f"/><rect x="39.9" y="61.7" width="6.4" height="3.7" fill="#a09890"/><rect x="30" y="124.6" width="4.5" height="3.3" fill="#2f5f88"/><rect x="197.6" y="70.1" width="4.1" height="4" fill="#a85f55"/><rect x="213.1" y="161.5" width="7.2" height="2.3" fill="#2f5f88"/><rect x="190" y="163.1" width="2.6" height="3.8" fill="#2a4028"/><rect x="50" y="73.3" width="7.5" height="3.8" fill="#8f8a86"/><rect x="43" y="144.9" width="5.5" height="3.6" fill="#7c7068"/><rect x="230.9" y="125.6" width="6.4" height="2.6" fill="#24382a"/><rect x="30.8" y="147.8" width="6.1" height="4.3" fill="#7c7068"/><rect x="167" y="65.4" width="3.8" height="2.3" fill="#a09890"/><rect x="213.7" y="99.8" width="7.5" height="3" fill="#7c7068"/><rect x="227.9" y="92.3" width="3" height="4.4" fill="#5a7a44"/><rect x="228.2" y="132.2" width="5" height="2.1" fill="#b8aca0"/><rect x="214" y="116.3" width="3.5" height="4.4" fill="#7c7068"/><rect x="266.6" y="133.3" width="5.5" height="2.6" fill="#a85f55"/><rect x="95.5" y="70.6" width="6" height="2.3" fill="#b8aca0"/><rect x="184.3" y="87.4" width="3.8" height="3.3" fill="#24382a"/><rect x="96.7" y="94.4" width="7.4" height="2.4" fill="#5a7a44"/><rect x="173.1" y="73.6" width="4.8" height="4.4" fill="#3f5f36"/><rect x="210.7" y="155.6" width="3.1" height="2.7" fill="#b86a5c"/><rect x="11.9" y="163" width="4.2" height="2.3" fill="#2f5f88"/><rect x="44.4" y="111.2" width="5.6" height="2.7" fill="#4a6a3a"/><rect x="3" y="174.1" width="6.6" height="2.2" fill="#7c7068"/><rect x="263.1" y="116.2" width="6.8" height="2.8" fill="#c27a68"/><rect x="257.2" y="135" width="3.9" height="2.6" fill="#c27a68"/><rect x="7" y="105.5" width="3.3" height="2.9" fill="#7c7068"/><rect x="232.6" y="166.6" width="3.4" height="4" fill="#7c7068"/><rect x="89.8" y="81.2" width="7" height="2.8" fill="#9c5a50"/><rect x="252.9" y="156.3" width="3.9" height="2.1" fill="#44789c"/><rect x="248.9" y="168.7" width="5.2" height="3.2" fill="#2a5278"/><rect x="39" y="86.2" width="3.3" height="3.6" fill="#c27a68"/><rect x="233.9" y="115.1" width="3.7" height="2.9" fill="#9c5a50"/><rect x="235.2" y="150.5" width="4.8" height="2.7" fill="#587038"/><rect x="195.5" y="162.4" width="2.8" height="2" fill="#a09890"/><rect x="248.6" y="78.9" width="4.1" height="3.1" fill="#5a7a44"/><rect x="172.1" y="77.8" width="4.7" height="3.5" fill="#c4806e"/><rect x="16.5" y="137.8" width="5.9" height="2.7" fill="#5a7a44"/><rect x="82.3" y="99.5" width="7.4" height="2.1" fill="#d49a84"/><rect x="40.4" y="126.6" width="5.6" height="4.4" fill="#3a6d96"/><rect x="31.4" y="80.8" width="7.4" height="3.4" fill="#c4806e"/><rect x="230.3" y="134.7" width="3.5" height="3.7" fill="#a09890"/><rect x="152.4" y="86.1" width="5.6" height="2.3" fill="#587038"/><rect x="36.9" y="117.9" width="5.3" height="4.1" fill="#7c7068"/><rect x="28.1" y="155.5" width="4.7" height="2.4" fill="#7c7068"/><rect x="130.7" y="70.7" width="4.6" height="3.5" fill="#c27a68"/><rect x="102.4" y="61.7" width="5.8" height="2.5" fill="#d49a84"/><rect x="37.3" y="164.5" width="3" height="4.5" fill="#2f5f88"/><rect x="252.3" y="160.1" width="3.4" height="3.9" fill="#2f5f88"/><rect x="227" y="74.1" width="4.6" height="3.8" fill="#b8aca0"/><rect x="12" y="129.4" width="3" height="3.4" fill="#8f8a86"/><rect x="9.4" y="164.7" width="3.8" height="2.9" fill="#8f8a86"/><rect x="230.5" y="126.9" width="3.1" height="2.1" fill="#c4806e"/><rect x="71.1" y="77.3" width="7.6" height="4.2" fill="#3f5f36"/><rect x="161.8" y="88.8" width="8" height="3.9" fill="#cf8a72"/><rect x="3.8" y="99.4" width="3.3" height="3.3" fill="#8f8a86"/><rect x="20.5" y="131.3" width="6" height="3.5" fill="#a09890"/><rect x="63" y="170.2" width="5.3" height="2.9" fill="#2a5278"/><rect x="245.8" y="127.8" width="2.7" height="2.4" fill="#cf8a72"/><rect x="257.8" y="96.2" width="4.3" height="3.2" fill="#b86a5c"/><rect x="126.3" y="173.4" width="2.7" height="2.4" fill="#5a7a44"/><rect x="105.7" y="67.3" width="8" height="2.9" fill="#587038"/><rect x="263.2" y="174.1" width="2.7" height="3.4" fill="#a09890"/><rect x="212.9" y="132.8" width="6" height="2.9" fill="#c4806e"/><rect x="65.5" y="151.6" width="3.3" height="2.2" fill="#6f7478"/><rect x="16.6" y="98.8" width="4.3" height="4.5" fill="#5a7a44"/><rect x="245.9" y="153.1" width="8" height="2.4" fill="#44789c"/><rect x="212.4" y="166.9" width="5.7" height="2.4" fill="#6f7478"/><rect x="257.8" y="99.2" width="7.6" height="3.5" fill="#b86a5c"/><rect x="83.7" y="100.7" width="5.1" height="4.4" fill="#8f8a86"/><rect x="230.6" y="96.7" width="3.5" height="4.2" fill="#3f5f36"/><rect x="172.3" y="87.2" width="2.6" height="2.1" fill="#587038"/><rect x="27.4" y="87.8" width="2.8" height="2.3" fill="#c27a68"/><rect x="222.6" y="160.7" width="4.4" height="2.3" fill="#35607f"/><rect x="176.7" y="61.7" width="4.3" height="2.1" fill="#c4806e"/><rect x="92.9" y="66.6" width="4.8" height="2.1" fill="#5a7a44"/><rect x="213.4" y="173.6" width="4.7" height="4.4" fill="#8f8a86"/><rect x="254.5" y="124.9" width="7.9" height="2.1" fill="#24382a"/><rect x="229.6" y="78" width="2.6" height="2.5" fill="#4a6a3a"/><rect x="238.1" y="77.6" width="7.9" height="3.4" fill="#9c5a50"/></svg><svg style="left:0;top:0" width="275" height="175" viewBox="0 0 275 175"><ellipse cx="139" cy="146" rx="62" ry="22" fill="#2a4a66"/><path d="M70 135 L80 108 L104 96 L172 96 L196 108 L206 135 Q200 162 139 166 Q78 162 70 135Z" fill="#cdb896"/><path d="M80 108 L104 97 L108 101 L88 136 L72 132Z" fill="#c46a70"/><path d="M172 97 L196 108 L204 132 L188 136 L168 101Z" fill="#c46a70"/><rect x="80" y="101" width="24" height="14" fill="#e6d6b0"/><rect x="70" y="128" width="16" height="16" fill="#efd9b0"/><rect x="188" y="126" width="16" height="16" fill="#efd9b0"/><path d="M112 104 L164 104 L172 138 L104 138Z" fill="#4f6a3a"/><path d="M120 105 L156 105 L160 132 L116 132Z" fill="#3f9a2f"/><path d="M104 100 H172 V104 H104Z" fill="#d8b48a"/><ellipse cx="139" cy="138" rx="28" ry="6" fill="#5fa0a8"/><path d="M78 140 Q90 160 139 162 Q188 160 200 140 L196 134 Q184 150 139 152 Q94 150 82 134Z" fill="#5a7088"/><path d="M78 142 Q90 164 139 167 Q188 164 200 142 L200 148 Q188 170 139 172 Q90 170 78 148Z" fill="#e4cfa4"/><path d="M80 150 Q92 170 139 173 Q186 170 198 150" stroke="#8a4a3a" stroke-width="2" fill="none" stroke-dasharray="2 2"/></svg></div>
    <svg style="left:299px;top:13px" width="19" height="19.500" viewBox="0 0 20 20" fill="#3aa7e3"><path d="M10 0.500L19 5.500V7H1V5.500Z"/><rect x="3" y="8.500" width="2.600" height="7"/><rect x="8.700" y="8.500" width="2.600" height="7"/><rect x="14.400" y="8.500" width="2.600" height="7"/><rect x="1" y="17" width="18" height="2.200"/></svg>
    <div class="abs" style="left:331px;top:11px;width:60px;height:25px;background:#bfe3f5"></div>
    <div class="abs" style="left:391px;top:11px;width:13px;height:26px;background:#f1f99d"></div>
    <div class="ttl" style="color:#728289;text-decoration:underline;text-decoration-thickness:1px;text-underline-offset:.500px">五大道</div>
    <div class="rank" style="left:409px">第1名</div>
    <div class="score"><b>4.5</b> 分</div>
    <div class="addr">天津市和平区成都道以南，马场道以北，西康路以东，马场道与南京路交口以…</div>
    <svg style="left:946.500px;top:53px" width="100" height="20" viewBox="0 0 100 20"><defs><g id="st"><circle cx="9" cy="9.500" r="8.500" fill="#12a0de"/><circle cx="9" cy="9.500" r="6.500" fill="#fff"/><path d="M12.900 7.400A4.500 4.500 0 1 0 12.900 11.600L9.800 9.500Z" fill="#12a0de"/></g></defs><use href="#st" x="0"/><use href="#st" x="20.100"/><use href="#st" x="40.200"/><use href="#st" x="60.300"/><g><circle cx="89.400" cy="9.500" r="8.500" fill="#cfcfcf"/><path d="M90.500 1.100A8.500 8.500 0 1 0 90.500 17.900Z" fill="#12a0de"/><circle cx="89.400" cy="9.500" r="6.500" fill="#fff"/><path d="M90.500 5.150A4.500 4.500 0 1 0 90.500 13.850Z" fill="#12a0de"/><path d="M90.500 5.150A4.500 4.500 0 0 1 93.300 7.400L90.500 9.300Z M90.500 9.700L93.300 11.600A4.500 4.500 0 0 1 90.500 13.850Z" fill="#dadada"/></g></svg>
    <div class="lvl">AAAA级景区</div>
    <div class="cnt">(2920条点评)</div>
    <div class="sep"></div>
    <div class="cmt"><b>大杜杜</b><i>点评:</i>&nbsp;&nbsp;五大道在天津市中心城区的南部，东、西向并列着以成都、重庆、大理、睦南…</div>
  </div>
  <!-- card 2 -->
  <div class="card" style="top:313px">
    <div class="abs" id="img2" style="left:0;top:0;width:276px;height:175px;overflow:hidden;background:#c9d6dd"><svg style="left:0;top:0" width="275" height="175" viewBox="0 0 275 175"><defs><linearGradient id="sk2" x1="0" y1="0" x2="1" y2="0.3"><stop offset="0" stop-color="#e6ecef"/><stop offset="0.35" stop-color="#c3d6e2"/><stop offset="0.6" stop-color="#b3cfe0"/><stop offset="1" stop-color="#d6d6de"/></linearGradient><radialGradient id="cl2" cx="0.5" cy="0.5" r="0.5"><stop offset="0" stop-color="#eef1f3" stop-opacity="0.95"/><stop offset="1" stop-color="#eef1f3" stop-opacity="0"/></radialGradient></defs><rect width="275" height="175" fill="url(#sk2)"/><ellipse cx="45" cy="22" rx="70" ry="28" fill="url(#cl2)"/><ellipse cx="110" cy="78" rx="60" ry="14" fill="url(#cl2)"/><ellipse cx="60" cy="55" rx="50" ry="10" fill="#a9c6dc" opacity="0.6"/><ellipse cx="240" cy="100" rx="50" ry="24" fill="#e4dcde" opacity="0.7"/><ellipse cx="200" cy="20" rx="60" ry="14" fill="#dfe6ea" opacity="0.6"/><rect x="2" y="66" width="26" height="80" fill="#5e504b"/><rect x="28" y="64" width="16" height="84" fill="#574844"/><rect x="2" y="66" width="5" height="80" fill="#4a4e5c"/><rect x="44" y="101" width="10" height="46" fill="#b49684"/><rect x="0" y="125" width="10" height="22" fill="#c9a088"/><rect x="18" y="132" width="30" height="16" fill="#8a8f96"/><rect x="60" y="123" width="16" height="30" fill="#a4949a"/><rect x="78" y="126" width="20" height="28" fill="#b0a0a2"/><rect x="92" y="123" width="7" height="30" fill="#9a8a92"/><rect x="99" y="132" width="14" height="24" fill="#8a8596"/><rect x="108" y="114" width="7" height="40" fill="#9a94a4"/><rect x="118" y="134" width="10" height="20" fill="#8f8a9a"/><rect x="170" y="106" width="22" height="46" fill="#8c7468"/><rect x="190" y="113" width="15" height="40" fill="#7c665e"/><rect x="160" y="122" width="12" height="30" fill="#a89a94"/><rect x="210" y="101" width="8" height="44" fill="#7d8aa4"/><rect x="258" y="112" width="17" height="44" fill="#4c5b7a"/><rect x="244" y="140" width="12" height="14" fill="#7888a0"/><rect x="222" y="146" width="40" height="10" fill="#c8ccd0"/><path d="M176 128 L125 158 L232 158Z" fill="#6f7278"/><rect x="116" y="152" width="126" height="23" fill="#4b5248"/><rect x="116" y="156" width="126" height="3" fill="#8a9070"/><rect x="116" y="163" width="126" height="2" fill="#a0a8a0"/><rect x="238" y="160" width="37" height="15" fill="#3f4a4a"/><rect x="236" y="150" width="39" height="12" fill="#2f3a30"/><path d="M0 140 Q10 134 20 144 Q34 140 44 148 Q60 144 74 150 Q86 144 98 150 Q110 150 118 160 L118 175 L0 175Z" fill="#26382a"/><rect x="0" y="166" width="48" height="9" fill="#9aa0a0"/><circle cx="175" cy="90" r="70" fill="none" stroke="#efe9e2" stroke-width="2.200"/><circle cx="175" cy="90" r="66.500" fill="none" stroke="#d8d0cc" stroke-width="0.800"/><path d="M175 90L242 90M175 90L240.7 103.1M175 90L236.9 115.6M175 90L230.7 127.2M175 90L222.4 137.4M175 90L212.2 145.7M175 90L200.6 151.9M175 90L188.1 155.7M175 90L175 157M175 90L161.9 155.7M175 90L149.4 151.9M175 90L137.8 145.7M175 90L127.6 137.4M175 90L119.3 127.2M175 90L113.1 115.6M175 90L109.3 103.1M175 90L108 90M175 90L109.3 76.9M175 90L113.1 64.4M175 90L119.3 52.8M175 90L127.6 42.6M175 90L137.8 34.3M175 90L149.4 28.1M175 90L161.9 24.3M175 90L175 23M175 90L188.1 24.3M175 90L200.6 28.1M175 90L212.2 34.3M175 90L222.4 42.6M175 90L230.7 52.8M175 90L236.9 64.4M175 90L240.7 76.9" stroke="#8f979c" stroke-width="0.350" fill="none"/><g fill="#3f4148"><circle cx="247" cy="92.2" r="1.600"/><circle cx="246.1" cy="101.5" r="1.600"/><circle cx="244" cy="110.7" r="1.600"/><circle cx="240.7" cy="119.5" r="1.600"/><circle cx="236.2" cy="127.9" r="1.600"/><circle cx="230.8" cy="135.5" r="1.600"/><circle cx="224.4" cy="142.4" r="1.600"/><circle cx="217.1" cy="148.4" r="1.600"/><circle cx="209.1" cy="153.4" r="1.600"/><circle cx="137.1" cy="151.2" r="1.600"/><circle cx="129.5" cy="145.8" r="1.600"/><circle cx="122.6" cy="139.4" r="1.600"/><circle cx="116.6" cy="132.1" r="1.600"/><circle cx="111.6" cy="124.1" r="1.600"/><circle cx="107.7" cy="115.5" r="1.600"/><circle cx="104.9" cy="106.5" r="1.600"/><circle cx="103.4" cy="97.3" r="1.600"/><circle cx="103" cy="87.8" r="1.600"/><circle cx="103.9" cy="78.5" r="1.600"/><circle cx="106" cy="69.3" r="1.600"/><circle cx="109.3" cy="60.5" r="1.600"/><circle cx="113.8" cy="52.1" r="1.600"/><circle cx="119.2" cy="44.5" r="1.600"/><circle cx="125.6" cy="37.6" r="1.600"/><circle cx="132.9" cy="31.6" r="1.600"/><circle cx="140.9" cy="26.6" r="1.600"/><circle cx="149.5" cy="22.7" r="1.600"/><circle cx="158.5" cy="19.9" r="1.600"/><circle cx="167.7" cy="18.4" r="1.600"/><circle cx="177.2" cy="18" r="1.600"/><circle cx="186.5" cy="18.9" r="1.600"/><circle cx="195.7" cy="21" r="1.600"/><circle cx="204.5" cy="24.3" r="1.600"/><circle cx="212.9" cy="28.8" r="1.600"/><circle cx="220.5" cy="34.2" r="1.600"/><circle cx="227.4" cy="40.6" r="1.600"/><circle cx="233.4" cy="47.9" r="1.600"/><circle cx="238.4" cy="55.9" r="1.600"/><circle cx="242.3" cy="64.5" r="1.600"/><circle cx="245.1" cy="73.5" r="1.600"/><circle cx="246.6" cy="82.7" r="1.600"/></g><path d="M173 84 H179 V124 L238 157 L232 160 L176 131 L120 162 L114 158 L173 124Z" fill="#f4efe6" stroke="#cfc6b8" stroke-width="0.600"/><rect x="170" y="88" width="3.500" height="14" fill="#6a6a66"/></svg></div>
    <svg style="left:299px;top:13px" width="19" height="19.500" viewBox="0 0 20 20" fill="#3aa7e3"><path d="M10 0.500L19 5.500V7H1V5.500Z"/><rect x="3" y="8.500" width="2.600" height="7"/><rect x="8.700" y="8.500" width="2.600" height="7"/><rect x="14.400" y="8.500" width="2.600" height="7"/><rect x="1" y="17" width="18" height="2.200"/></svg>
    <div class="ttl">天津之眼摩天轮</div>
    <div class="rank" style="left:489px">第2名</div>
    <div class="score"><b>4.5</b> 分</div>
    <div class="addr">天津市河北区三岔河口永乐桥上</div>
    <svg style="left:946.500px;top:53px" width="100" height="20" viewBox="0 0 100 20"><defs><g id="st2"><circle cx="9" cy="9.500" r="8.500" fill="#12a0de"/><circle cx="9" cy="9.500" r="6.500" fill="#fff"/><path d="M12.900 7.400A4.500 4.500 0 1 0 12.900 11.600L9.800 9.500Z" fill="#12a0de"/></g></defs><use href="#st2" x="0"/><use href="#st2" x="20.100"/><use href="#st2" x="40.200"/><use href="#st2" x="60.300"/><g><circle cx="89.400" cy="9.500" r="8.500" fill="#cfcfcf"/><path d="M90.500 1.100A8.500 8.500 0 1 0 90.500 17.900Z" fill="#12a0de"/><circle cx="89.400" cy="9.500" r="6.500" fill="#fff"/><path d="M90.500 5.150A4.500 4.500 0 1 0 90.500 13.850Z" fill="#12a0de"/><path d="M90.500 5.150A4.500 4.500 0 0 1 93.300 7.400L90.500 9.300Z M90.500 9.700L93.300 11.600A4.500 4.500 0 0 1 90.500 13.850Z" fill="#dadada"/></g></svg>
    <div class="lvl">AAAA级景区</div>
    <div class="cnt">(7786条点评)</div>
    <div class="sep"></div>
    <div class="cmt"><b>蓝海清风1号</b><i>点评:</i>&nbsp;&nbsp;天津之眼是个横跨在天津母亲河海河上的幸福摩天轮，也天津最美城市地…</div>
  </div>
  <!-- card 3 -->
  <div class="card" style="top:515px">
    <div class="abs" id="img3" style="left:0;top:0;width:276px;height:175px;overflow:hidden;background:linear-gradient(90deg,#ffffff 0%,#e6f1fa 10%,#bedaf1 38%,#9ac2e8 100%)"><svg style="left:0;top:0" width="275" height="175" viewBox="0 0 275 175"><path d="M39 30L40 22L42 19L43 21L45 17L47 20L49 18L51 21L53 19L55 22L58 21L60 24L60 30Z M79 30L80 22L82 19L84 21L86 18L88 21L90 19L92 23L92 30Z M181 30L182 23L184 19L186 22L188 19L190 22L192 24L192 30Z M202 30L204 25L207 22L210 24L213 21L216 23L219 19L222 21L225 18L228 20L231 18L233 22L234 30Z" fill="#4a6650" opacity=".85"/><rect x="60" y="27" width="19" height="3" fill="#4b6650" opacity=".7"/><rect x="192" y="27" width="10" height="3" fill="#4b6650" opacity=".7"/></svg></div>
    <svg style="left:299px;top:13px" width="19" height="19.500" viewBox="0 0 20 20" fill="#3aa7e3"><path d="M10 0.500L19 5.500V7H1V5.500Z"/><rect x="3" y="8.500" width="2.600" height="7"/><rect x="8.700" y="8.500" width="2.600" height="7"/><rect x="14.400" y="8.500" width="2.600" height="7"/><rect x="1" y="17" width="18" height="2.200"/></svg>
    <div class="ttl">古文化街</div>
    <div class="rank" style="left:429px">第3名</div>
    <div class="score"><b>4.4</b> 分</div>
  </div>
  <div id="pbottom" class="abs">
    <div class="t" style="left:342px;top:7px;font-size:17.500px;line-height:22px;color:#555">点亮旅行家勋章，开启新福利</div>
    <div class="abs" style="left:698px;top:8px;width:1px;height:22px;background:#ddd"></div>
    <div class="t" style="left:794px;top:7px;font-size:17.500px;line-height:22px;color:#555;letter-spacing:.1px">【美食风暴】超值美食套餐买一赠一!</div>
  </div>
  <div id="pnav" class="abs">
    <div class="nv" style="left:248px">主页</div>
    <div class="abs" style="left:455px;top:0;width:7px;height:42px;background:linear-gradient(90deg,#dadada,#f6f6f6);clip-path:polygon(0 0,100% 0,0 100%)"></div>
    <div class="abs" style="left:330px;top:0;width:125px;height:42px;background:#00a6e0"></div>
    <div class="nv" style="left:369px;color:#fff">景点</div>
    <div class="nv" style="left:497px">住宿</div>
    <div class="newb" style="left:550px">NEW</div>
    <div class="nvs" style="left:579px"></div>
    <div class="nv" style="left:615px">美食</div>
    <div class="nvs" style="left:697px"></div>
    <div class="nv" style="left:734px">购物</div>
    <div class="nvs" style="left:816px"></div>
    <div class="nv" style="left:853px">游记</div>
    <div class="nv" style="left:972px">行程</div>
    <div class="nvs" style="left:1053px"></div>
    <div class="nv" style="left:1068px">当地向导</div>
    <div class="nvs" style="left:1172px"></div>
    <div class="nv" style="left:1187px">旅游度假</div>
    <div class="newb" style="left:1286px">NEW</div>
  </div>
</div>
<div id="pscroll" class="abs"><div class="abs" style="left:1px;top:75px;width:19px;height:48px;background:#cdcdcd"></div><svg style="left:5px;top:8px" width="11" height="7" viewBox="0 0 11 7"><path d="M1 6L5.500 1.500L10 6" stroke="#4a4a4f" stroke-width="1.800" fill="none"/></svg><svg style="left:5px;top:569px" width="11" height="7" viewBox="0 0 11 7"><path d="M1 1L5.500 5.500L10 1" stroke="#4a4a4f" stroke-width="1.800" fill="none"/></svg></div>
<!-- OVERLAYS -->
<div id="overlays">
  <!-- left promo -->
  <div class="abs" style="left:-60px;top:461px;width:210px;height:134px;border-radius:0 67px 67px 0;background:#2f2f2f;box-shadow:3px 4px 6px rgba(0,0,0,.45)"></div>
  <div class="abs" style="left:19px;top:436px;width:61px;height:84px;background:#d9282c;border-radius:3px 3px 2px 2px;overflow:hidden"><div class="abs" style="left:-2px;top:-24px;width:65px;height:46px;background:#e9494c;clip-path:polygon(0 0,100% 0,100% 55%,50% 100%,0 55%)"></div></div>
  <div class="t" style="left:32px;top:459px;font-size:60px;line-height:60px;color:#ffe84a;font-family:'Liberation Sans',sans-serif;transform-origin:0 0">¥</div>
  <svg style="left:0;top:470px" width="100" height="60" viewBox="0 0 100 60"><g transform="translate(0,-9)"><path d="M3 20Q10 36 26 32L18 38Q8 36 3 20Z M4 19L12 18Q16 30 27 32Q10 36 4 19Z" fill="#f0b62a"/><path d="M80 5Q88 14 94 11L90 17Q82 16 80 5Z" fill="#f0b62a"/><path d="M70 46Q86 44 93 36Q94 48 80 54Q74 54 70 46Z" fill="#f2b92c"/></g><ellipse cx="34" cy="43" rx="9" ry="6" fill="#f5c62f"/><ellipse cx="34" cy="39" rx="9" ry="6" fill="#ffd93b"/><ellipse cx="62" cy="34" rx="8" ry="5" fill="#f5c62f"/><ellipse cx="62" cy="30" rx="8" ry="5" fill="#ffd93b"/><ellipse cx="62" cy="40" rx="8" ry="5" fill="#f0b92a"/><ellipse cx="64" cy="48" rx="6" ry="4.500" fill="#f5c62f"/><ellipse cx="47" cy="44" rx="12" ry="12.500" fill="#ffd52e"/><ellipse cx="47" cy="43" rx="9" ry="9.500" fill="#ffdf4d"/><ellipse cx="17" cy="55" rx="6" ry="3.500" fill="#ffd52e"/><ellipse cx="76" cy="54" rx="6" ry="3.500" fill="#ffd52e"/></svg>
  <div class="t" style="left:41px;top:506px;font-size:14px;line-height:16px;color:#f2b222;font-family:'Liberation Sans',sans-serif">¥</div>
  <div class="t" style="left:7px;top:539px;font-size:21px;line-height:22px;color:#fff;font-weight:900;text-shadow:0 0 1px #fff,0 0 1px #fff;letter-spacing:-.3px">手机预订</div>
  <div class="t" style="left:17px;top:564px;font-size:21px;line-height:22px;color:#fff;font-weight:900;text-shadow:0 0 1px #fff,0 0 1px #fff;letter-spacing:-.3px">更便宜</div>
  <svg style="left:110px;top:509px" width="22" height="38" viewBox="0 0 22 38"><path d="M4 4L18 19L4 34" stroke="#fff" stroke-width="6" fill="none" stroke-linecap="round" stroke-linejoin="round"/></svg>
  <!-- right float -->
  <div class="abs" style="left:1849px;top:520px;width:44px;height:44px;background:#c9c9c9;border-radius:4px"></div>
  <svg style="left:1859px;top:527px" width="24" height="30" viewBox="0 0 24 30"><path d="M1.500 1H22.500" stroke="#fff" stroke-width="1.800"/><path d="M12 5.500L23 16.500H16V29H8V16.500H1Z" fill="#fff"/></svg>
  <div class="abs" style="left:1849px;top:566px;width:44px;height:44px;background:#c9c9c9;border-radius:4px"></div>
  <div class="t" style="left:1856px;top:571px;font-size:15px;line-height:17.500px;color:#fff;white-space:pre">反馈
建议</div>
  <!-- highlighter guides -->
  <svg style="left:0;top:91px" width="1899" height="581" viewBox="0 0 1899 581"><g stroke="#1695d6" stroke-width="1.200" stroke-dasharray="6 4" fill="none"><path d="M0 122.300H1897"/><path d="M0 147.500H1897"/><path d="M937.300 0V581"/><path d="M996.400 0V581"/></g></svg>
  <!-- infobar -->
  <div class="abs" style="left:921px;top:172px;width:106px;height:31px;background:#363b48;border-radius:4px"></div>
  <div class="abs" style="left:965px;top:203px;width:0;height:0;border-left:8px solid transparent;border-right:8px solid transparent;border-top:8px solid #363b48"></div>
  <div class="t" style="left:931px;top:177.500px;font-size:15px;line-height:17px;color:#e590f0">a</div>
  <div class="abs" style="left:946px;top:178px;width:1px;height:17px;background:#5a5f6b"></div>
  <div class="t" style="left:955px;top:177.500px;font-size:15px;line-height:17px;color:#e4e4e8;letter-spacing:-.1px">48 × 20.8</div>
  <!-- title tooltip -->
  <div class="abs" style="left:981px;top:254px;width:61px;height:26px;background:#fff;border:1px solid #767676"></div>
  <div class="t" style="left:988px;top:259px;font-size:15px;line-height:17px;color:#000">五大道</div>
  <!-- status url -->
  <div class="abs" style="left:0;top:651px;width:371px;height:23px;background:#f1f1f3;border-top:1px solid #d8d8dc;border-right:1px solid #d8d8dc;border-top-right-radius:3px"></div>
  <div class="t" id="sturl" style="left:5px;top:655px;font-size:16px;line-height:18px;color:#1a1a1c;letter-spacing:.44px">https://you.ctrip.com/sight/tianjin154/56365.html</div>
</div>
<!-- DEVTOOLS -->
<div id="split" class="abs"></div>
<div id="dt" class="abs">
  <div id="dtbar" class="abs">
    <div class="abs" style="left:0;top:0;width:40px;height:34px;background:#ededf0"></div>
    <svg style="left:10px;top:7px" width="21" height="21" viewBox="0 0 21 21"><path d="M8 18.500H4.500Q1.500 18.500 1.500 15.500V4.500Q1.500 1.500 4.500 1.500H16Q19 1.500 19 4.500V7" stroke="#0a6bd8" stroke-width="2.400" fill="none" stroke-linecap="round"/><path d="M9 8L19.500 12L15 13.800L18.800 17.600L17.200 19.200L13.400 15.400L11.500 20Z" fill="#0a6bd8"/></svg>
    <div class="abs" style="left:41px;top:-1px;width:93px;height:2px;background:#0a84ff"></div>
    <svg style="left:52px;top:7px" width="19" height="21" viewBox="0 0 19 21"><rect x="3.500" y="4.500" width="12" height="12" rx="2.500" fill="none" stroke="#0a6bd8" stroke-width="2.300"/><path d="M9.500 0V4.500M9.500 16.500V21M0 10.500H3.500M15.500 10.500H19" stroke="#0a6bd8" stroke-width="2.300"/></svg>
    <div class="dtt" style="left:79px;color:#0a6bd8">查看器</div>
    <svg style="left:144px;top:8px" width="20" height="19" viewBox="0 0 20 19"><rect x="1.200" y="1.200" width="17.600" height="16.600" rx="2.500" fill="none" stroke="#38383d" stroke-width="2"/><path d="M6 5.500L10 9.500L6 13.500" stroke="#38383d" stroke-width="1.800" fill="none"/></svg>
    <div class="dtt" style="left:171px">控制台</div>
    <svg style="left:236px;top:10px" width="20" height="15" viewBox="0 0 20 15"><path d="M3 1.200H12.500L18.500 7.500L12.500 13.800H3Q1.200 13.800 1.200 12V3Q1.200 1.200 3 1.200Z" fill="none" stroke="#38383d" stroke-width="2.200" stroke-linejoin="round"/></svg>
    <div class="dtt" style="left:264px">调试器</div>
    <svg style="left:329px;top:8px" width="20" height="20" viewBox="0 0 20 20"><path d="M5.500 19V2M1 6.500L5.500 1.500L10 6.500M14.500 1V18M10 13.500L14.500 18.500L19 13.500" stroke="#38383d" stroke-width="2" fill="none"/></svg>
    <div class="dtt" style="left:356px">网络</div>
    <div class="t" style="left:406px;top:7px;font-size:19px;line-height:20px;font-weight:bold;color:#38383d;font-family:'Liberation Sans',sans-serif;letter-spacing:3px">{}</div>
    <div class="dtt" style="left:434px">样式编辑器</div>
    <svg style="left:529px;top:8px" width="20" height="19" viewBox="0 0 20 19"><path d="M4 17A9 9 0 1 1 17 15" stroke="#38383d" stroke-width="2.200" fill="none" stroke-linecap="round"/><circle cx="9.500" cy="15" r="2.700" fill="#38383d"/><path d="M10 14L13.500 7" stroke="#38383d" stroke-width="2"/></svg>
    <div class="dtt" style="left:556px">性能</div>
    <svg style="left:606px;top:8px" width="20" height="20" viewBox="0 0 20 20"><rect x="5.500" y="1.500" width="9" height="17" rx="3" fill="none" stroke="#38383d" stroke-width="2.200"/><path d="M0.500 6Q3 5 4 6.500M0.500 10Q3 9 4 10.500M0.500 14Q3 13 4 14.500M16 6.500Q17 5 19.500 6M16 10.500Q17 9 19.500 10M16 14.500Q17 13 19.500 14" stroke="#38383d" stroke-width="1.200" fill="none"/></svg>
    <div class="dtt" style="left:633px">内存</div>
    <svg style="left:685px;top:7px" width="18" height="21" viewBox="0 0 18 21"><rect x="1.200" y="1.200" width="15.600" height="18.600" rx="3" fill="none" stroke="#38383d" stroke-width="2.200"/><path d="M5.500 7H12.500M5.500 13.500H12.500" stroke="#38383d" stroke-width="2"/></svg>
    <div class="dtt" style="left:711px">存储</div>
    <svg style="left:762px;top:7px" width="18" height="21" viewBox="0 0 18 21" fill="#1bb11b"><circle cx="9" cy="2.700" r="2.500"/><path d="M0.500 6.500H17.500V9.500H12.500V20.500H10V14.500H8V20.500H5.500V9.500H0.500Z"/></svg>
    <div class="dtt" style="left:788px">无障碍环境</div>
    <svg style="left:1783px;top:8px" width="20" height="19" viewBox="0 0 20 19"><rect x="1.200" y="1.200" width="17.600" height="16.600" rx="3" fill="none" stroke="#38383d" stroke-width="2"/><path d="M1.200 6.500H18.800M7.500 6.500V17.800" stroke="#38383d" stroke-width="1.800"/></svg>
    <div class="abs" style="left:1815px;top:5px;width:1px;height:25px;background:#dcdce0"></div>
    <svg style="left:1828px;top:7px" width="20" height="21" viewBox="0 0 20 21"><path d="M6.500 7V4Q6.500 1.500 9 1.500H16Q18.500 1.500 18.500 4V17Q18.500 19.500 16 19.500H11" stroke="#38383d" stroke-width="2.200" fill="none"/><rect x="1.200" y="7.500" width="8.800" height="12" rx="2" fill="none" stroke="#38383d" stroke-width="2.200"/></svg>
    <svg style="left:1861px;top:15px" width="20" height="5" viewBox="0 0 20 5" fill="#38383d"><circle cx="2.500" cy="2.500" r="2.200"/><circle cx="10" cy="2.500" r="2.200"/><circle cx="17.500" cy="2.500" r="2.200"/></svg>
    <svg style="left:1897px;top:10px" width="14" height="14" viewBox="0 0 14 14"><path d="M1 1L13 13M13 1L1 13" stroke="#38383d" stroke-width="2" fill="none"/></svg>
  </div>
  <div id="dtsearch" class="abs">
    <svg style="left:10px;top:8px" width="16" height="16" viewBox="0 0 16 16"><circle cx="6" cy="6" r="4.800" fill="none" stroke="#8a8a8f" stroke-width="1.800"/><path d="M9.500 9.500L14.500 14.500" stroke="#8a8a8f" stroke-width="2.200" stroke-linecap="round"/></svg>
    <div class="t" style="left:28.500px;top:8px;font-size:14.500px;line-height:17px;color:#9a9a9e">搜索 HTML</div>
    <div class="abs" style="left:969px;top:5px;width:1px;height:21px;background:#e8e8ea"></div>
    <svg style="left:981px;top:8px" width="16" height="16" viewBox="0 0 16 16"><path d="M8 0.500V15.500M0.500 8H15.500" stroke="#2a2a2e" stroke-width="1.700"/></svg>
    <svg style="left:1015px;top:7px" width="18" height="18" viewBox="0 0 18 18"><path d="M1.500 16.500L2.500 13L10 5.500L12.500 8L5 15.500Z" fill="none" stroke="#2a2a2e" stroke-width="1.300"/><path d="M9 3.500L14.500 9" stroke="#2a2a2e" stroke-width="2" stroke-linecap="round"/><path d="M11.500 6.500L14 1.800Q15.500 0.500 16.800 1.800Q17.700 3 16.500 4.200Z" fill="#2a2a2e" stroke="#2a2a2e" stroke-width="1.200"/></svg>
    <div class="abs" style="left:1044px;top:0;width:1px;height:32px;background:#dcdce0"></div>
    <svg style="left:1057px;top:8px" width="13" height="14" viewBox="0 0 13 14"><path d="M1 1H12L7.800 6.500V12.500L5.200 11V6.500Z" fill="none" stroke="#8a8a8f" stroke-width="1.300" stroke-linejoin="round"/></svg>
    <div class="t" style="left:1074px;top:8px;font-size:13.800px;line-height:16px;color:#8f8f94">过滤样式</div>
    <div class="t" style="left:1341px;top:7px;font-size:15px;line-height:17px;color:#222;font-weight:bold;letter-spacing:-.4px">:hov</div>
    <div class="t" style="left:1380px;top:7px;font-size:15px;line-height:17px;color:#222;font-weight:bold;letter-spacing:-.7px">.cls</div>
    <svg style="left:1419px;top:7px" width="15" height="15" viewBox="0 0 15 15"><path d="M7.500 0.500V14.500M0.500 7.500H14.500" stroke="#2a2a2e" stroke-width="2"/></svg>
    <svg style="left:1453px;top:6px" width="16" height="18" viewBox="0 0 16 18"><path d="M4 1.200H10L14.800 6V14Q14.800 16.800 12 16.800H4Q1.200 16.800 1.200 14V4Q1.200 1.200 4 1.200Z" fill="none" stroke="#2a2a2e" stroke-width="1.900"/><path d="M5 8H9M5 10.500H11M5 13H11" stroke="#2a2a2e" stroke-width="1"/></svg>
    <div class="abs" style="left:1482px;top:0;width:438px;height:31px;background:#f9f9fa"></div>
    <div class="abs" style="left:1481px;top:0;width:1px;height:32px;background:#dcdce0"></div>
    <svg style="left:1491px;top:8px" width="19" height="16" viewBox="0 0 19 16"><rect x="0.800" y="0.800" width="17.400" height="14.400" rx="1.500" fill="none" stroke="#38383d" stroke-width="1.500"/><rect x="12.500" y="1" width="5.500" height="14" fill="#b8b8bc"/><path d="M12.500 0.800V15.200" stroke="#38383d" stroke-width="1.500"/><path d="M4.500 4.500L9 8L4.500 11.500Z" fill="#38383d"/></svg>
    <div class="abs" style="left:1518px;top:0;width:58px;height:2px;background:#0a84ff"></div>
    <div class="t" style="left:1530px;top:7px;font-size:15px;line-height:17px;color:#0a6bd8">布局</div>
    <div class="t" style="left:1587px;top:7px;font-size:15px;line-height:17px">计算值</div>
    <div class="t" style="left:1660px;top:7px;font-size:15px;line-height:17px">更改</div>
    <div class="t" style="left:1717px;top:7px;font-size:15px;line-height:17px">字体</div>
    <div class="t" style="left:1774px;top:7px;font-size:15px;line-height:17px">动画</div>
  </div>
  <!-- markup -->
  <div id="markup" class="abs mono" style="left:0;top:67px;width:1044px;height:213px;overflow:hidden;background:#fff;border-right:1px solid #dcdce0">
    <div class="abs" style="left:0;top:155px;width:1025px;height:20px;background:#ebf3fb"></div>
    <div class="abs" style="left:26px;top:0;width:1px;height:213px;background:#dcdcdc"></div>
    <div class="tw d" style="left:90px;top:2px"></div>
    <div class="ml" style="top:-6px;padding-left:105px">&lt;<span class="tg">div</span> <span class="an">class</span>="<span class="av">list_wide_mod2</span>"&gt;</div>
    <div class="tw d" style="left:104px;top:22px"></div>
    <div class="ml" style="top:14px;padding-left:119px">&lt;<span class="tg">div</span> <span class="an">class</span>="<span class="av">list_mod2</span>"&gt;</div>
    <div class="tw r" style="left:120px;top:39px"></div>
    <div class="ml" style="top:34px;padding-left:132px">&lt;<span class="tg">div</span> <span class="an">class</span>="<span class="av">leftimg</span>"&gt;<span style="display:inline-block;width:16px;height:10px;margin:0 3px 0 3px;border:1px solid #c0c0c4;border-radius:3px;background:#ededf0;vertical-align:0px;position:relative"><span style="position:absolute;left:3px;top:3px;width:2px;height:2px;background:#333;box-shadow:3.500px 0 #333,7px 0 #333"></span></span>&lt;/<span class="tg">div</span>&gt;</div>
    <div class="tw d" style="left:118px;top:62px"></div>
    <div class="ml" style="top:54px;padding-left:132px">&lt;<span class="tg">div</span> <span class="an">class</span>="<span class="av">rdetailbox</span>"&gt;</div>
    <div class="tw d" style="left:132px;top:82px"></div>
    <div class="ml" style="top:74px;padding-left:146px">&lt;<span class="tg">dl</span>&gt;</div>
    <div class="tw d" style="left:146px;top:102px"></div>
    <div class="ml" style="top:94px;padding-left:160px">&lt;<span class="tg">dt</span>&gt;</div>
    <div class="ml" style="top:114px;padding-left:173px">&lt;<span class="tg">i</span> <span class="an">class</span>="<span class="av">sight</span>"&gt;&lt;/<span class="tg">i</span>&gt;</div>
    <div class="ws" style="left:173px;top:137px">空白</div>
    <div class="ml" style="top:154px;padding-left:173px">&lt;<span class="tg">a</span> <span class="an">target</span>="<span class="av">_blank</span>" <span class="an">href</span>="<span class="av" style="text-decoration:underline">/sight/tianjin154/56365.html</span>" <span class="an">title</span>="<span class="av">五大道</span>"&gt;五大道&lt;/<span class="tg">a</span>&gt;</div>
    <div class="ws" style="left:173px;top:177px">空白</div>
    <div class="ml" style="top:194px;padding-left:173px">&lt;<span class="tg">s</span>&gt;第1名&lt;/<span class="tg">s</span>&gt;</div>
    <!-- scrollbar -->
    <div class="abs" style="left:1025px;top:0;width:19px;height:213px;background:#f0f0f0"></div>
    <div class="abs" style="left:1025px;top:126px;width:18px;height:20px;background:#cdcdcd"></div>
    <svg style="left:1029px;top:8px" width="11" height="7" viewBox="0 0 11 7"><path d="M1 6L5.500 1.500L10 6" stroke="#4a4a4f" stroke-width="1.800" fill="none"/></svg>
    <svg style="left:1029px;top:199px" width="11" height="7" viewBox="0 0 11 7"><path d="M1 1L5.500 5.500L10 1" stroke="#4a4a4f" stroke-width="1.800" fill="none"/></svg>
  </div>
  <!-- breadcrumbs -->
  <div class="abs" style="left:0;top:280px;width:1044px;height:34px;background:#fff;border-top:1px solid #dcdce0;border-right:1px solid #dcdce0">
    <div class="t" style="left:13px;top:6px;font-size:15px;line-height:17px;color:#38383d">html</div>
    <svg style="left:50px;top:10px" width="8" height="10" viewBox="0 0 8 10"><path d="M1.500 1L6 5L1.500 9" stroke="#a0a0a8" stroke-width="1.700" fill="none"/></svg>
    <div class="t" style="left:67px;top:6px;font-size:15px;line-height:17px;color:#0a6bd8">body</div>
  </div>
  <!-- rules -->
  <div id="rules" class="abs mono" style="left:1045px;top:67px;width:436px;height:247px;overflow:hidden;background:#fff">
    <div class="rl" style="left:4px;top:3px;color:#38383d;font-family:'Liberation Sans','Noto Sans CJK SC',sans-serif;font-size:14px">元素</div>
    <svg style="left:41px;top:4px" width="15" height="15" viewBox="0 0 15 15"><rect x="3.500" y="3.500" width="8" height="8" rx="1.500" fill="none" stroke="#75757a" stroke-width="1.700"/><path d="M7.500 0V3.500M7.500 11.500V15M0 7.500H3.500M11.500 7.500H15" stroke="#75757a" stroke-width="1.700"/></svg>
    <div class="rl" style="left:65px;top:3px;color:#38383d">{</div>
    <div class="rl" style="right:25px;top:3px;font-family:'Liberation Sans','Noto Sans CJK SC',sans-serif;font-size:13.500px;color:#737373">内联</div>
    <div class="rl" style="left:4px;top:22px;color:#38383d">}</div>
    <div class="abs" style="left:0;top:38px;width:417px;height:1px;background:#e0e0e2"></div>
    <div class="rl" style="left:4px;top:44px">html, <span style="color:#222">body</span>, div, dl, dt, dd,
ul, ol, li, h1, h2, h3, h4,
h5, h6, pre, code, form, fieldset, legend, input,
textarea, p, blockquote, th, td, em, button</div>
    <svg style="left:357px;top:93px" width="15" height="15" viewBox="0 0 15 15"><rect x="3.500" y="3.500" width="8" height="8" rx="1.500" fill="none" stroke="#75757a" stroke-width="1.700"/><path d="M7.500 0V3.500M7.500 11.500V15M0 7.500H3.500M11.500 7.500H15" stroke="#75757a" stroke-width="1.700"/></svg>
    <div class="rl" style="left:384px;top:92px;color:#38383d">{</div>
    <div class="rl" style="right:25px;top:44px">PageHeader_V4.css:5</div>
    <div class="rl" style="left:28px;top:111px;line-height:18px;color:#38383d"><span class="pn">margin</span>: <span style="display:inline-block;width:12px;height:10px;position:relative;vertical-align:-1px"><span style="position:absolute;left:3px;top:0;border-top:5px solid transparent;border-bottom:5px solid transparent;border-left:6.500px solid #75757a"></span></span><span class="pv">0</span>;
<span class="pn">padding</span>: <span style="display:inline-block;width:12px;height:10px;position:relative;vertical-align:-1px"><span style="position:absolute;left:3px;top:0;border-top:5px solid transparent;border-bottom:5px solid transparent;border-left:6.500px solid #75757a"></span></span><span class="pv">0</span>;</div>
    <div class="rl" style="left:4px;top:147px;color:#38383d">}</div>
    <div class="abs" style="left:0;top:166px;width:417px;height:1px;background:#e0e0e2"></div>
    <div class="rl" style="left:4px;top:169px;color:#38383d">body</div>
    <svg style="left:44px;top:170px" width="15" height="15" viewBox="0 0 15 15"><rect x="3.500" y="3.500" width="8" height="8" rx="1.500" fill="none" stroke="#75757a" stroke-width="1.700"/><path d="M7.500 0V3.500M7.500 11.500V15M0 7.500H3.500M11.500 7.500H15" stroke="#75757a" stroke-width="1.700"/></svg>
    <div class="rl" style="left:68px;top:169px;color:#38383d">{</div>
    <div class="rl" style="right:25px;top:169px">login_popup_new.css:3</div>
    <div class="rl" style="left:28px;top:189px;line-height:18px;color:#8a8a8f"><span style="text-decoration:line-through">margin: <span style="display:inline-block;width:12px;height:10px;position:relative;vertical-align:-1px"><span style="position:absolute;left:3px;top:0;border-top:5px solid transparent;border-bottom:5px solid transparent;border-left:6.500px solid #8a8a8f"></span></span>0;</span>
<span style="text-decoration:line-through">padding: <span style="display:inline-block;width:12px;height:10px;position:relative;vertical-align:-1px"><span style="position:absolute;left:3px;top:0;border-top:5px solid transparent;border-bottom:5px solid transparent;border-left:6.500px solid #8a8a8f"></span></span>0;</span></div>
    <svg style="left:132px;top:191px" width="13" height="14" viewBox="0 0 13 14"><path d="M1 1H12L7.800 6.500V12.500L5.200 11V6.500Z" fill="none" stroke="#75757a" stroke-width="1.300" stroke-linejoin="round"/></svg>
    <svg style="left:140px;top:209px" width="13" height="14" viewBox="0 0 13 14"><path d="M1 1H12L7.800 6.500V12.500L5.200 11V6.500Z" fill="none" stroke="#75757a" stroke-width="1.300" stroke-linejoin="round"/></svg>
    <div class="rl" style="left:4px;top:225px;color:#38383d">}</div>
    <div class="abs" style="left:0;top:242px;width:417px;height:1px;background:#e0e0e2"></div>
    <!-- scrollbar -->
    <div class="abs" style="left:417px;top:0;width:19px;height:247px;background:#f0f0f0"></div>
    <div class="abs" style="left:418px;top:20px;width:17px;height:73px;background:#cdcdcd"></div>
    <svg style="left:421px;top:8px" width="11" height="7" viewBox="0 0 11 7"><path d="M1 6L5.500 1.500L10 6" stroke="#4a4a4f" stroke-width="1.800" fill="none"/></svg>
    <svg style="left:421px;top:231px" width="11" height="7" viewBox="0 0 11 7"><path d="M1 1L5.500 5.500L10 1" stroke="#4a4a4f" stroke-width="1.800" fill="none"/></svg>
  </div>
  <div class="abs" style="left:1481px;top:67px;width:1px;height:247px;background:#dcdce0"></div>
  <!-- layout panel -->
  <div class="lh" style="top:66px"><div class="tw d"></div><div class="t">弹性盒</div></div>
  <div class="li" style="top:107px">选择一个弹性（Flex）容器或项目以继续。</div>
  <div class="lh" style="top:133px"><div class="tw d"></div><div class="t">网格</div></div>
  <div class="li" style="top:173px">此页面上没有使用 CSS 网格</div>
  <div class="lh" style="top:200px"><div class="tw d"></div><div class="t">盒模型</div></div>
  <div class="abs" style="left:1530px;top:263px;width:322px;height:60px;background:#fdffdf;border:1px dashed #d4d800"></div>
  <div class="t mono" style="left:1543px;top:270px;font-size:13.200px;line-height:16px;color:#222">margin</div>
  <div class="abs" style="left:1558px;top:291px;width:265px;height:40px;background:#6f6f6f"></div>
  <div class="abs" style="left:1565px;top:298px;width:252px;height:40px;background:#e3dcff"></div>
  <div class="abs" style="left:1558px;top:291px;width:58px;height:18px;background:#6a6a6a;border-bottom-right-radius:4px"></div>
  <div class="t mono" style="left:1563px;top:293px;font-size:13.270px;line-height:16px;color:#fff">border</div>
  <!-- scrollbar -->
  <div class="abs" style="left:1899px;top:67px;width:21px;height:247px;background:#f0f0f0"></div>
  <div class="abs" style="left:1900px;top:90px;width:19px;height:73px;background:#cdcdcd"></div>
  <svg style="left:1904px;top:75px" width="11" height="7" viewBox="0 0 11 7"><path d="M1 6L5.500 1.500L10 6" stroke="#4a4a4f" stroke-width="1.800" fill="none"/></svg>
  <svg style="left:1904px;top:298px" width="11" height="7" viewBox="0 0 11 7"><path d="M1 1L5.500 5.500L10 1" stroke="#4a4a4f" stroke-width="1.800" fill="none"/></svg>
</div>
<!-- NOTIFICATION -->
<div id="notif" class="abs">
  <svg style="left:16px;top:12px" width="19" height="19" viewBox="0 0 19 19"><circle cx="9.500" cy="9.500" r="8.300" fill="none" stroke="#0c0c0d" stroke-width="1.700"/><text x="9.500" y="14" font-size="12.500" font-weight="bold" text-anchor="middle" font-family="Liberation Sans, sans-serif" fill="#0c0c0d">?</text></svg>
  <div class="t" style="left:50px;top:12px;font-size:15px;line-height:17px;color:#0c0c0d;letter-spacing:.11px">为提高用户体验，<span style="letter-spacing:.35px;word-spacing:1.500px">Firefox </span>将发送部分功能的使用情况给我们，用于进一步优化火狐浏览器的易用性，您可以自由选择是否向我们分享数据。</div>
  <div class="abs" style="left:1700px;top:5px;width:173px;height:30px;background:#e1e1e1;border:1px solid #adadad"></div>
  <div class="t" style="left:1708px;top:11.500px;font-size:15px;line-height:17px;color:#0c0c0d">选择您要分享的数据(<u>C</u>)</div>
  <svg style="left:1886px;top:14.500px" width="13" height="13" viewBox="0 0 13 13"><path d="M1 1L12 12M12 1L1 12" stroke="#0c0c0d" stroke-width="1.700" fill="none"/></svg>
</div>
<!-- WIDGETS -->
<div id="widgets">
  <!-- system monitor floating -->
  <div class="abs" style="left:1910px;top:697px;width:30px;height:59px;border-radius:4px;background:#50576a;box-shadow:0 0 0 1px #3a4050 inset"></div>
  <div class="abs" style="left:1914px;top:704px;width:4px;height:45px;background:linear-gradient(180deg,#2f3442 0,#2f3442 25%,#f5a623 26%,#f2e24a 50%,#8fdc5a 75%,#3fd8c0 100%)"></div><div class="abs" style="left:1914px;top:704px;width:4px;height:45px;background:repeating-linear-gradient(180deg,transparent 0 1px,#50576a 1px 2px)"></div>
  <!-- green circle -->
  <div class="abs" style="left:1663px;top:942.500px;width:81px;height:81px;border-radius:50%;background:conic-gradient(#43d96b 0deg,#3fd666 268deg,rgba(240,243,245,.85) 268deg,rgba(250,250,250,.9) 358deg,#43d96b 358deg);box-shadow:0 0 3px rgba(120,120,120,.25)"></div>
  <div class="abs" style="left:1669.500px;top:949px;width:68px;height:68px;border-radius:50%;background:radial-gradient(circle at 50% 45%,rgba(255,255,255,.96) 55%,rgba(236,250,240,.93) 100%)"></div>
  <div class="t" style="left:1681px;top:959px;font-size:29px;line-height:30px;color:#3c3c3c;letter-spacing:-1.200px;font-family:'Liberation Sans',sans-serif;font-weight:normal;opacity:.9">74<span style="font-size:15.500px;letter-spacing:0;margin-left:1.500px">%</span></div>
  <svg style="left:1680px;top:993px" width="9" height="14" viewBox="0 0 9 14"><path d="M4.500 0.800Q6.500 0.800 6.500 2.800V7.800Q8.200 9 8.200 10.600Q8.200 13.300 4.500 13.300Q0.800 13.300 0.800 10.600Q0.800 9 2.500 7.800V2.800Q2.500 0.800 4.500 0.800Z" fill="#fff" stroke="#f39a1e" stroke-width="1.300"/><path d="M4.500 5V11" stroke="#f39a1e" stroke-width="2" stroke-linecap="round"/></svg>
  <div class="t" style="left:1695px;top:993px;font-size:12px;line-height:13px;color:#333;letter-spacing:-.2px">68°C</div>
</div>
</body>
</html>
